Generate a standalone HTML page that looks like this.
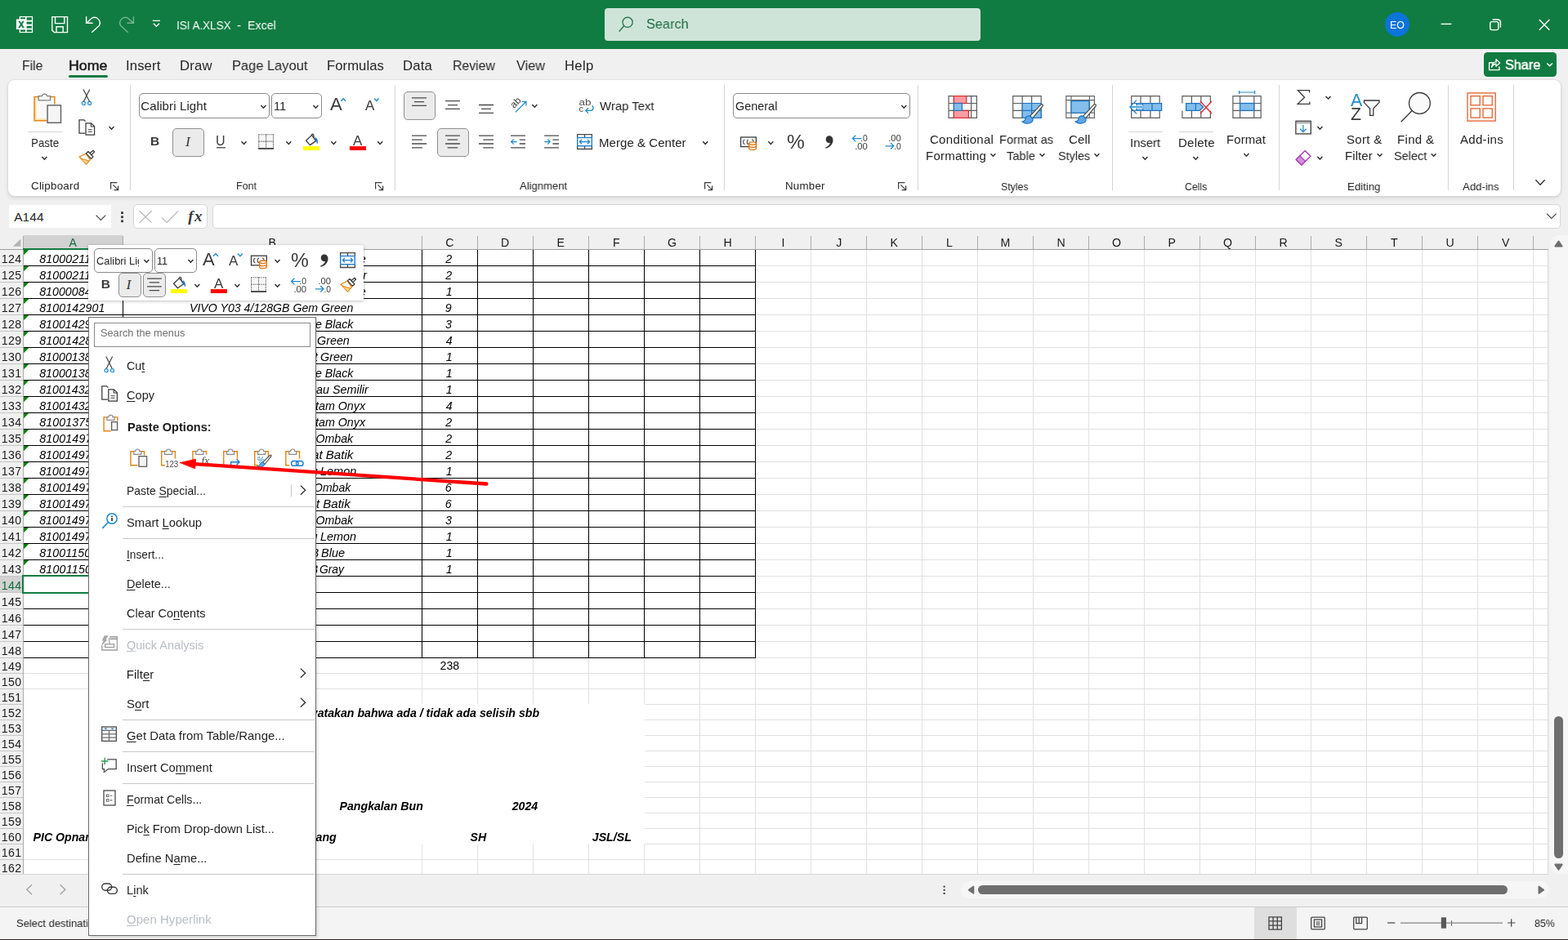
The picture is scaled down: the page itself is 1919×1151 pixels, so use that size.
<!DOCTYPE html>
<html lang="en"><head><meta charset="utf-8"><title>ISI A.XLSX - Excel</title>
<style>
html,body{margin:0;padding:0}
body{width:1919px;height:1151px;overflow:hidden;background:#fff;position:relative;font-family:"Liberation Sans",sans-serif;color:#242424;font-size:15px}
div,span,svg{position:absolute;box-sizing:border-box}
span{white-space:pre}
u{text-decoration:underline;text-underline-offset:1.5px;text-decoration-thickness:1px}
</style></head>
<body>
<div style="left:0px;top:0px;width:1919px;height:60px;background:#107C41"></div>
<div style="left:0px;top:60px;width:1919px;height:228px;background:#F0F0F0"></div>
<span style="left:215.62px;top:22px;font-size:15px;line-height:18px;transform:scaleX(0.8970);transform-origin:0 0;color:#fff;will-change:transform;">ISI A.XLSX</span>
<span style="left:290.26px;top:22px;font-size:15px;line-height:18px;color:#fff;will-change:transform;">-</span>
<span style="left:303.43px;top:22px;font-size:15px;line-height:18px;transform:scaleX(0.9494);transform-origin:0 0;color:#fff;will-change:transform;">Excel</span>
<div style="left:740px;top:10px;width:460px;height:40px;background:#CFE4D8;border-radius:4px"></div>
<span style="left:791.49px;top:20px;font-size:16.67px;line-height:20px;transform:scaleX(0.9801);transform-origin:0 0;color:#1B6B3F;will-change:transform;">Search</span>
<div style="left:1695px;top:15px;width:30px;height:30px;background:#0B74D8;border-radius:50%"></div>
<span style="left:1700.80px;top:24px;font-size:12.4px;line-height:15px;transform:scaleX(0.9946);transform-origin:0 0;color:#fff;will-change:transform;">EO</span>
<span style="left:26.68px;top:71px;font-size:16.67px;line-height:20px;transform:scaleX(0.9480);transform-origin:0 0;color:#242424;will-change:transform;">File</span>
<span style="left:153.53px;top:71px;font-size:16.67px;line-height:20px;letter-spacing:0.133px;color:#242424;will-change:transform;">Insert</span>
<span style="left:219.51px;top:71px;font-size:16.67px;line-height:20px;letter-spacing:0.220px;color:#242424;will-change:transform;">Draw</span>
<span style="left:283.63px;top:71px;font-size:16.67px;line-height:20px;transform:scaleX(0.9868);transform-origin:0 0;color:#242424;will-change:transform;">Page Layout</span>
<span style="left:400.41px;top:71px;font-size:16.67px;line-height:20px;letter-spacing:0.051px;color:#242424;will-change:transform;">Formulas</span>
<span style="left:493.41px;top:71px;font-size:16.67px;line-height:20px;letter-spacing:0.199px;color:#242424;will-change:transform;">Data</span>
<span style="left:553.67px;top:71px;font-size:16.67px;line-height:20px;transform:scaleX(0.9510);transform-origin:0 0;color:#242424;will-change:transform;">Review</span>
<span style="left:631.86px;top:71px;font-size:16.67px;line-height:20px;transform:scaleX(0.9781);transform-origin:0 0;color:#242424;will-change:transform;">View</span>
<span style="left:690.71px;top:71px;font-size:16.67px;line-height:20px;letter-spacing:0.342px;color:#242424;will-change:transform;">Help</span>
<span style="left:83.63px;top:71px;font-size:16.67px;line-height:20px;transform:scaleX(1.0689);transform-origin:0 0;color:#1a1a1a;will-change:transform;-webkit-text-stroke:0.45px #1a1a1a;">Home</span>
<div style="left:84px;top:92px;width:48px;height:3px;background:#107C41;border-radius:1.5px"></div>
<div style="left:1816px;top:64px;width:89px;height:30px;background:#107C41;border-radius:4.5px"></div>
<span style="left:1841.50px;top:70px;font-size:16.67px;line-height:20px;transform:scaleX(0.9739);transform-origin:0 0;color:#fff;will-change:transform;-webkit-text-stroke:0.45px #fff;">Share</span>
<div style="left:9.5px;top:98px;width:1900.5px;height:142px;background:#fff;border-radius:7.5px;box-shadow:0 2px 5px rgba(0,0,0,.13),0 0 1.5px rgba(0,0,0,.16)"></div>
<div style="left:11px;top:251px;width:125px;height:28px;background:#fff"></div>
<span style="left:17.17px;top:257px;font-size:15.4px;line-height:18px;letter-spacing:0.112px;color:#242424;">A144</span>
<div style="left:162.5px;top:250px;width:91px;height:30px;background:#fff;border:1px solid #D6D6D6;border-radius:5px"></div>
<div style="left:259.5px;top:250px;width:1650.5px;height:30px;background:#fff;border:1px solid #D6D6D6;border-radius:5px"></div>
<span style="left:230.35px;top:253px;font-size:19px;line-height:23px;letter-spacing:1.451px;color:#3a3a3a;font-weight:700;font-style:italic;font-family:'Liberation Serif', serif;">fx</span>
<svg width="1919" height="1151" viewBox="0 0 1919 1151" style="left:0;top:0;"><rect x="23.7" y="19.9" width="16.4" height="20.2" fill="#fff"/><rect x="32.6" y="21.2" width="6.3" height="3.5" fill="#107C41"/><rect x="32.6" y="26.6" width="6.3" height="3.0" fill="#107C41"/><rect x="32.6" y="31.7" width="6.3" height="2.9" fill="#107C41"/><rect x="32.6" y="36.4" width="6.3" height="2.5" fill="#107C41"/><rect x="25" y="21.2" width="6" height="2.3" fill="#107C41"/><rect x="25" y="36.4" width="6" height="2.5" fill="#107C41"/><rect x="19.9" y="23.4" width="11.4" height="12.7" rx="0.6" fill="#fff"/><text x="26" y="33.8" font-size="10.6" font-weight="700" text-anchor="middle" fill="#107C41" stroke="#107C41" stroke-width="0.5" font-family="Liberation Sans, sans-serif">X</text><path d="M63.8 20.6H82.5V39.6H66.3L63.8 37.1Z M67.5 20.6V28.6H78.8V20.6 M69 39.6V32.8H77.2V39.6" fill="none" stroke="#fff" stroke-width="1.4" stroke-linejoin="miter"/><path d="M105.6 20.3V28.2H113.6 M106 28 L112.6 22.2 A6.6 6.6 0 0 1 121.2 31.6 L112.2 39.8" fill="none" stroke="#fff" stroke-width="1.4"/><g opacity="0.42"><path d="M163.4 20.3V28.2H155.4 M163 28 L156.4 22.2 A6.6 6.6 0 0 0 147.8 31.6 L156.8 39.8" fill="none" stroke="#fff" stroke-width="1.4"/></g><path d="M186.8 25.4H196 M187.8 28.8L191.4 32.2L195 28.8" fill="none" stroke="#fff" stroke-width="1.4"/><circle cx="768.1" cy="27.3" r="6.1" fill="none" stroke="#1B6B3F" stroke-width="1.2"/><path d="M763.7 31.8L757.6 38.6" stroke="#1B6B3F" stroke-width="1.3" fill="none"/><path d="M1763.6 29.4H1776.4" fill="none" stroke="#fff" stroke-width="1.4"/><rect x="1823.8" y="26.6" width="10" height="10" rx="2" fill="none" stroke="#fff" stroke-width="1.4"/><path d="M1826.6 24H1833 A3.4 3.4 0 0 1 1836.4 27.4V33.8" fill="none" stroke="#fff" stroke-width="1.4"/><path d="M1883.8 24.1L1896.4 36.7M1896.4 24.1L1883.8 36.7" fill="none" stroke="#fff" stroke-width="1.4"/><path d="M1828 76.8H1822.6V85.6H1834.9V81.4" fill="none" stroke="#fff" stroke-width="1.4"/><path d="M1825.6 82.2C1826 78 1828.6 75.9 1831 75.9V72.6L1835.6 77L1831 81.2V78.2C1829 78.2 1827 79.4 1825.6 82.2Z" fill="none" stroke="#fff" stroke-width="1.4" stroke-linejoin="round"/><path d="M1893.3 77.4L1896.6 80.8L1899.9 77.4" fill="none" stroke="#fff" stroke-width="1.4"/><path d="M117.6 263.6L123.4 269.4L129.2 263.6" fill="none" stroke="#444" stroke-width="1.2"/><rect x="148.1" y="259.2" width="2.8" height="2.8" fill="#3a3a3a"/><rect x="148.1" y="264.3" width="2.8" height="2.8" fill="#3a3a3a"/><rect x="148.1" y="269.4" width="2.8" height="2.8" fill="#3a3a3a"/><path d="M170.6 258.2L185.6 272.6M185.6 258.2L170.6 272.6" fill="none" stroke="#B8B8B8" stroke-width="1.3"/><path d="M198 266.4L204.2 272.4L218 258.4" fill="none" stroke="#B8B8B8" stroke-width="1.3"/><path d="M1893 261.6L1898.8 267.4L1904.6 261.6" fill="none" stroke="#444" stroke-width="1.2"/></svg>
<span style="left:37.99px;top:166px;font-size:15px;line-height:18px;transform:scaleX(0.8915);transform-origin:0 0;color:#242424;will-change:transform;">Paste</span>
<span style="left:37.50px;top:220px;font-size:13.33px;line-height:16px;letter-spacing:0.263px;color:#242424;will-change:transform;">Clipboard</span>
<div style="left:170px;top:114px;width:160px;height:31px;background:#fff;border:1px solid #8A8A8A;border-radius:5px"></div>
<span style="left:172.30px;top:121px;font-size:15px;line-height:18px;letter-spacing:0.120px;color:#242424;">Calibri Light</span>
<div style="left:332px;top:114px;width:62px;height:31px;background:#fff;border:1px solid #8A8A8A;border-radius:5px"></div>
<span style="left:335.25px;top:121px;font-size:15px;line-height:18px;transform:scaleX(0.9683);transform-origin:0 0;color:#242424;">11</span>
<span style="left:404.06px;top:115px;font-size:22px;line-height:26px;color:#3a3a3a;will-change:transform;">A</span>
<span style="left:447.17px;top:120px;font-size:17px;line-height:20px;color:#3a3a3a;will-change:transform;">A</span>
<span style="left:183.78px;top:163px;font-size:15.5px;line-height:19px;color:#3a3a3a;font-weight:700;will-change:transform;">B</span>
<div style="left:211px;top:157px;width:38.5px;height:35px;background:#EBEBEB;border:1px solid #8F8F8F;border-radius:5px"></div>
<span style="left:226.78px;top:163px;font-size:17.5px;line-height:21px;color:#3a3a3a;font-style:italic;font-family:'Liberation Serif', serif;will-change:transform;">I</span>
<span style="left:263.67px;top:163px;font-size:16px;line-height:19px;color:#3a3a3a;will-change:transform;">U</span>
<span style="left:432.27px;top:163px;font-size:17px;line-height:20px;color:#3a3a3a;will-change:transform;">A</span>
<span style="left:288.71px;top:220px;font-size:13.33px;line-height:16px;transform:scaleX(0.9383);transform-origin:0 0;color:#242424;will-change:transform;">Font</span>
<div style="left:494px;top:112px;width:38.8px;height:35px;background:#EBEBEB;border:1px solid #8F8F8F;border-radius:5px"></div>
<span style="left:734.28px;top:121px;font-size:15px;line-height:18px;transform:scaleX(0.9934);transform-origin:0 0;color:#242424;will-change:transform;">Wrap Text</span>
<div style="left:535px;top:157px;width:39px;height:35px;background:#EBEBEB;border:1px solid #8F8F8F;border-radius:5px"></div>
<span style="left:733.27px;top:166px;font-size:15px;line-height:18px;letter-spacing:0.051px;color:#242424;will-change:transform;">Merge &amp; Center</span>
<span style="left:636.27px;top:220px;font-size:13.33px;line-height:16px;transform:scaleX(0.9796);transform-origin:0 0;color:#242424;will-change:transform;">Alignment</span>
<div style="left:897px;top:114px;width:217px;height:31px;background:#fff;border:1px solid #8A8A8A;border-radius:5px"></div>
<span style="left:899.64px;top:121px;font-size:15px;line-height:18px;transform:scaleX(0.9620);transform-origin:0 0;color:#242424;">General</span>
<span style="left:962.80px;top:159px;font-size:24.5px;line-height:29px;color:#3a3a3a;will-change:transform;">%</span>
<span style="left:960.55px;top:220px;font-size:13.33px;line-height:16px;letter-spacing:0.218px;color:#242424;will-change:transform;">Number</span>
<span style="left:1138.40px;top:162px;font-size:15px;line-height:18px;letter-spacing:0.290px;color:#242424;will-change:transform;">Conditional</span>
<span style="left:1133.27px;top:182px;font-size:15px;line-height:18px;letter-spacing:0.249px;color:#242424;will-change:transform;">Formatting</span>
<span style="left:1223.40px;top:162px;font-size:15px;line-height:18px;transform:scaleX(0.9784);transform-origin:0 0;color:#242424;will-change:transform;">Format as</span>
<span style="left:1232.42px;top:182px;font-size:15px;line-height:18px;transform:scaleX(0.9765);transform-origin:0 0;color:#242424;will-change:transform;">Table</span>
<span style="left:1307.90px;top:162px;font-size:15px;line-height:18px;letter-spacing:0.166px;color:#242424;will-change:transform;">Cell</span>
<span style="left:1295.33px;top:182px;font-size:15px;line-height:18px;transform:scaleX(0.9593);transform-origin:0 0;color:#242424;will-change:transform;">Styles</span>
<span style="left:1225.45px;top:221px;font-size:13.33px;line-height:16px;transform:scaleX(0.9231);transform-origin:0 0;color:#242424;will-change:transform;">Styles</span>
<span style="left:1383.21px;top:166px;font-size:15px;line-height:18px;transform:scaleX(0.9889);transform-origin:0 0;color:#242424;will-change:transform;">Insert</span>
<span style="left:1441.67px;top:166px;font-size:15px;line-height:18px;letter-spacing:0.244px;color:#242424;will-change:transform;">Delete</span>
<span style="left:1501.47px;top:162px;font-size:15px;line-height:18px;letter-spacing:0.085px;color:#242424;will-change:transform;">Format</span>
<span style="left:1449.78px;top:221px;font-size:13.33px;line-height:16px;transform:scaleX(0.9179);transform-origin:0 0;color:#242424;will-change:transform;">Cells</span>
<span style="left:1653.07px;top:110px;font-size:21.4px;line-height:26px;color:#1E8BCD;will-change:transform;">A</span>
<span style="left:1653.26px;top:127px;font-size:21.4px;line-height:26px;color:#3a3a3a;will-change:transform;">Z</span>
<span style="left:1648.38px;top:162px;font-size:15px;line-height:18px;letter-spacing:0.303px;color:#242424;will-change:transform;">Sort &amp;</span>
<span style="left:1646.47px;top:182px;font-size:15px;line-height:18px;letter-spacing:0.088px;color:#242424;will-change:transform;">Filter</span>
<span style="left:1710.27px;top:162px;font-size:15px;line-height:18px;letter-spacing:0.340px;color:#242424;will-change:transform;">Find &amp;</span>
<span style="left:1705.52px;top:182px;font-size:15px;line-height:18px;transform:scaleX(0.9651);transform-origin:0 0;color:#242424;will-change:transform;">Select</span>
<span style="left:1648.65px;top:221px;font-size:13.33px;line-height:16px;transform:scaleX(0.9918);transform-origin:0 0;color:#242424;will-change:transform;">Editing</span>
<span style="left:1787.07px;top:162px;font-size:15px;line-height:18px;letter-spacing:0.305px;color:#242424;will-change:transform;">Add-ins</span>
<span style="left:1790.27px;top:221px;font-size:13.33px;line-height:16px;transform:scaleX(0.9875);transform-origin:0 0;color:#242424;will-change:transform;">Add-ins</span>
<svg width="1919" height="1151" viewBox="0 0 1919 1151" style="left:0;top:0;"><g transform="translate(40.4 112.6) scale(1.0)"><path d="M6.6 5.8H1.7V35.2H17V14.8H26.4V5.8H21.4" fill="#FAFAFA" stroke="none"/><path d="M3.5 7.4V33.4H17" fill="none" stroke="#FCDFA0" stroke-width="1.4"/><path d="M6.6 5.8H1.7V35.2H17" fill="none" stroke="#E8820E" stroke-width="1.5"/><path d="M21.4 5.8H26.4V14.8" fill="none" stroke="#E8820E" stroke-width="1.5"/><path d="M6.8 10.2V5H10.8 A3.3 3.3 0 0 1 17.2 5H21.2V10.2Z" fill="#FAFAFA" stroke="#7E7E7E" stroke-width="1.3"/><rect x="17.7" y="16.3" width="16.4" height="21.4" fill="#F5F5F5" stroke="#5E5E5E" stroke-width="1.4"/></g><rect x="34" y="161" width="42" height="1" fill="#D4D4D4"/><path d="M51.4 192.0L54.4 195.2L57.4 192.0" fill="none" stroke="#2b2b2b" stroke-width="1.4"/><g transform="translate(99.4 109.2) scale(1.0)"><path d="M2.6 0.2L10.2 15.4M10.4 0.2L2.8 15.4" fill="none" stroke="#3A3A3A" stroke-width="1.15" /><circle cx="2.9" cy="17.3" r="2.05" fill="none" stroke="#1E8BCD" stroke-width="1.2" /><circle cx="10.2" cy="17.3" r="2.05" fill="none" stroke="#1E8BCD" stroke-width="1.2" /></g><g transform="translate(96.4 146.2) scale(1.0)"><path d="M7.6 17H0.6V0.6H6.4L8.2 2.4" fill="none" stroke="#3A3A3A" stroke-width="1.25" /><path d="M8.6 4.6H15.2L19.2 8.6V19H8.6Z" fill="#FAFAFA" stroke="#3A3A3A" stroke-width="1.25"/><path d="M15 4.8V8.8H19" fill="none" stroke="#3A3A3A" stroke-width="1.1" /><path d="M11.4 12.4H16.4M11.4 15.2H16.4" fill="none" stroke="#6a6a6a" stroke-width="1.1" /></g><path d="M133.5 155.1L136.5 158.3L139.5 155.1" fill="none" stroke="#2b2b2b" stroke-width="1.4"/><g transform="translate(96.4 183.4) scale(1.0)"><path d="M0.8 8.6L8.8 4.6L14 12.2L9 17.6Z" fill="#FFFDF8" stroke="#E8820E" stroke-width="1.3" stroke-linejoin="round"/><path d="M3.6 11.4L12 13.6L9 17L4.2 12.2Z" fill="#FDD88A" stroke="none"/><path d="M3.2 10.8L12.4 13.6" fill="none" stroke="#E8820E" stroke-width="1.1"/><path d="M9 4.4L11.6 2L17.6 8.6L15 11Z" fill="#fff" stroke="#3A3A3A" stroke-width="1.25" stroke-linejoin="round"/><path d="M13.6 4.2L17.6 0.8L19.2 2.6L15.4 6.2Z" fill="#fff" stroke="#3A3A3A" stroke-width="1.25" stroke-linejoin="round"/></g><path d="M143.4 223.6H135.6V231.4M138.4 226.4L144.4 232.4M144.6 227.6V232.6H139.6" fill="none" stroke="#3a3a3a" stroke-width="1.2"/><rect x="159.0" y="104" width="1" height="129" fill="#D4D4D4"/><path d="M319.4 129.0L322.4 132.2L325.4 129.0" fill="none" stroke="#2b2b2b" stroke-width="1.4"/><path d="M383.4 129.0L386.4 132.2L389.4 129.0" fill="none" stroke="#2b2b2b" stroke-width="1.4"/><path d="M417.4 123.8L420.2 120.8L423 123.8" fill="none" stroke="#1E8BCD" stroke-width="1.4" /><path d="M458 120.6L460.8 123.6L463.6 120.6" fill="none" stroke="#1E8BCD" stroke-width="1.4" /><rect x="265" y="180.2" width="11" height="1.2" fill="#3a3a3a"/><path d="M295.5 173.2L298.5 176.4L301.5 173.2" fill="none" stroke="#2b2b2b" stroke-width="1.4"/><rect x="316.70000000000005" y="164.7" width="17.8" height="16.6" fill="#F7F7F7"/><path d="M316.70000000000005 164.7H334.5M316.70000000000005 173.1H334.5M316.70000000000005 164.7V181.1M325.6 164.7V181.1M334.5 164.7V181.1" fill="none" stroke="#4a4a4a" stroke-width="1.1" stroke-dasharray="1.2 1.2"/><rect x="316.1" y="181.0" width="19" height="1.9" fill="#4a4a4a"/><path d="M350.3 173.2L353.3 176.4L356.3 173.2" fill="none" stroke="#2b2b2b" stroke-width="1.4"/><g transform="translate(374 164.2)"><path d="M0.6 8L7.6 1.2L12.6 8.4L5.4 13.4Z" fill="#fff" stroke="#3A3A3A" stroke-width="1.3" stroke-linejoin="round"/><path d="M7.4 1.4C7.2 -0.4 9.6 -0.6 9.8 1.2L10.2 4.6" fill="none" stroke="#3A3A3A" stroke-width="1.2" /><path d="M12 4.4C14 5.4 14.8 8 14.4 11.4C13.6 9.4 13.2 7.6 11.4 6.4Z" fill="#1E74C5" stroke="#1E74C5" stroke-width="0.8"/></g><rect x="371" y="179.1" width="20.1" height="4.9" fill="#FFFF00"/><path d="M405.4 173.2L408.4 176.4L411.4 173.2" fill="none" stroke="#2b2b2b" stroke-width="1.4"/><rect x="427.9" y="179.1" width="20.1" height="4.9" fill="#FF0000"/><path d="M462.2 173.2L465.2 176.4L468.2 173.2" fill="none" stroke="#2b2b2b" stroke-width="1.4"/><path d="M467.4 223.6H459.6V231.4M462.4 226.4L468.4 232.4M468.6 227.6V232.6H463.6" fill="none" stroke="#3a3a3a" stroke-width="1.2"/><rect x="482.9" y="104" width="1" height="129" fill="#D4D4D4"/><path d="M504 119.9H522M506.9 124.7H519.1M504 129.4H522" fill="none" stroke="#4a4a4a" stroke-width="1.3"/><path d="M545 123.7H562.9M548 128.6H560M545 133.4H562.9" fill="none" stroke="#4a4a4a" stroke-width="1.3"/><path d="M586 128.5H604M589 133.4H601M586 138.3H604" fill="none" stroke="#4a4a4a" stroke-width="1.3"/><text transform="translate(629 133) rotate(-45)" font-family="Liberation Sans, sans-serif" font-size="11.8" fill="#3a3a3a">ab</text><path d="M630.8 137.4L643.7 124.5M638.6 124.3H643.9V129.6" fill="none" stroke="#1E8BCD" stroke-width="1.3" /><path d="M651.3 128.0L654.3 131.2L657.3 128.0" fill="none" stroke="#2b2b2b" stroke-width="1.4"/><text x="708.6" y="128.6" font-family="Liberation Sans, sans-serif" font-size="11.4" fill="#4a4a4a" textLength="15" lengthAdjust="spacingAndGlyphs">ab</text><text x="708.6" y="137.4" font-family="Liberation Sans, sans-serif" font-size="11.4" fill="#4a4a4a">c</text><path d="M724.6 129.4C727 131 726.4 135.4 722.4 135.4H717M720 132.2L716.8 135.4L720 138.6" fill="none" stroke="#1E8BCD" stroke-width="1.3" /><path d="M504 166.2H522M504 171.1H516.9M504 176H522M504 180.9H516.9" fill="none" stroke="#4a4a4a" stroke-width="1.3"/><path d="M545 166.2H562.9M547.6 171.1H560.2M545 176H562.9M547.6 180.9H560.2" fill="none" stroke="#4a4a4a" stroke-width="1.3"/><path d="M586 166.2H604M591.3 171.1H604M586 176H604M591.3 180.9H604" fill="none" stroke="#4a4a4a" stroke-width="1.3"/><path d="M625.1 166.2H643M635.8 171.1H643M635.8 176H643M625.1 180.9H643" fill="none" stroke="#4a4a4a" stroke-width="1.3"/><path d="M632.6 173.6H625.6M628.6 170.6L625.6 173.6L628.6 176.6" fill="none" stroke="#1E8BCD" stroke-width="1.3" /><path d="M666.1 166.2H684M676.4 171.1H684M676.4 176H684M666.1 180.9H684" fill="none" stroke="#4a4a4a" stroke-width="1.3"/><path d="M666.2 173.6H673.2M670.2 170.6L673.2 173.6L670.2 176.6" fill="none" stroke="#1E8BCD" stroke-width="1.3" /><path d="M706.6 168.29999999999998V164.7H724.4V168.29999999999998M715.5 164.7V168.29999999999998M706.6 178.9V182.5H724.4V178.9M715.5 178.9V182.5" fill="none" stroke="#4a4a4a" stroke-width="1.3" /><rect x="706.7" y="168.5" width="17.6" height="10.2" fill="#fff" stroke="#1E7FD0" stroke-width="1.4"/><path d="M709.4 173.6H721.6M712 171.0L709.4 173.6L712 176.2M719 171.0L721.6 173.6L719 176.2" fill="none" stroke="#1E7FD0" stroke-width="1.3" /><path d="M860.2 173.2L863.2 176.4L866.2 173.2" fill="none" stroke="#2b2b2b" stroke-width="1.4"/><path d="M870.4 223.6H862.6V231.4M865.4 226.4L871.4 232.4M871.6 227.6V232.6H866.6" fill="none" stroke="#3a3a3a" stroke-width="1.2"/><rect x="885.9" y="104" width="1" height="129" fill="#D4D4D4"/><path d="M1103.3 129.0L1106.3 132.2L1109.3 129.0" fill="none" stroke="#2b2b2b" stroke-width="1.4"/><g transform="translate(906 167.4)"><rect x="0.6" y="0.6" width="18.8" height="11.6" fill="#fff" stroke="#3A3A3A" stroke-width="1.3"/><path d="M5.6 3.6C3 3.8 3 9 5.6 9.2M10.2 3.6C7.6 3.8 7.6 9 10.2 9.2M14 3.4C15.6 3.6 16.2 5 16 6.2" fill="none" stroke="#555" stroke-width="1.2" /><path d="M10.8 8.2V14.4C10.8 16.6 19.4 16.6 19.4 14.4V8.2Z" fill="#fff" stroke="#E8710A" stroke-width="1.3"/><ellipse cx="15.1" cy="8.2" rx="4.3" ry="1.8" fill="#fff" stroke="#E8710A" stroke-width="1.3"/><path d="M10.8 11.4C10.8 13.6 19.4 13.6 19.4 11.4" fill="none" stroke="#E8710A" stroke-width="1.3"/></g><path d="M940.3 173.2L943.3 176.4L946.3 173.2" fill="none" stroke="#2b2b2b" stroke-width="1.4"/><g transform="translate(1009.9 166.3)"><path d="M4.8 0C7.8 0 9.6 2.2 9.6 5.4C9.6 10.4 5.6 14.4 0.6 15.4L0.2 14.2C3.6 13 5.8 10.6 6 8.4C3.4 9.2 0.8 7.4 0.8 4.4C0.8 1.8 2.6 0 4.8 0Z" fill="#333"/></g><text x="1053.1999999999998" y="173.2" font-family="Liberation Sans, sans-serif" font-size="10.6" fill="#3a3a3a" textLength="8.6" lengthAdjust="spacingAndGlyphs">.0</text><text x="1046.1999999999998" y="182.79999999999998" font-family="Liberation Sans, sans-serif" font-size="10.6" fill="#3a3a3a" textLength="15.6" lengthAdjust="spacingAndGlyphs">.00</text><path d="M1054.6 169.6H1043.3999999999999M1047.1999999999998 165.79999999999998L1043.3999999999999 169.6L1047.1999999999998 173.39999999999998" fill="none" stroke="#1E8BCD" stroke-width="1.3" /><text x="1087.1999999999998" y="173.2" font-family="Liberation Sans, sans-serif" font-size="10.6" fill="#3a3a3a" textLength="15.6" lengthAdjust="spacingAndGlyphs">.00</text><text x="1094.1999999999998" y="182.79999999999998" font-family="Liberation Sans, sans-serif" font-size="10.6" fill="#3a3a3a" textLength="8.6" lengthAdjust="spacingAndGlyphs">.0</text><path d="M1083.6 178.79999999999998H1093.8M1090.0 175.0L1093.8 178.79999999999998L1090.0 182.6" fill="none" stroke="#1E8BCD" stroke-width="1.3" /><path d="M1107.4 223.6H1099.6V231.4M1102.4 226.4L1108.4 232.4M1108.6 227.6V232.6H1103.6" fill="none" stroke="#3a3a3a" stroke-width="1.2"/><rect x="1122.9" y="104" width="1" height="129" fill="#D4D4D4"/><path d="M1161 117.6H1195.4V144.4H1161ZM1167.4 117.6V144.4M1188.6 117.6V144.4M1161 126.5H1195.4M1161 135.4H1195.4" fill="#FAFAFA" stroke="#5E5E5E" stroke-width="1.2"/><rect x="1167.4" y="117.6" width="15.4" height="8.9" fill="#FF9BA3" stroke="#D92C32" stroke-width="1.2"/><rect x="1167.4" y="135.4" width="18" height="9" fill="#FF9BA3" stroke="#D92C32" stroke-width="1.2"/><rect x="1167.4" y="126.5" width="10" height="8.9" fill="#83BEEC" stroke="#1E74C5" stroke-width="1.2"/><path d="M1212.5 188.2L1215.4 191.2L1218.3 188.2" fill="none" stroke="#2b2b2b" stroke-width="1.4"/><path d="M1239.7 117.6H1274.2V144.4H1239.7ZM1251.2 117.6V144.4M1262.6 117.6V144.4M1239.7 126.5H1274.2M1239.7 135.4H1274.2" fill="#FAFAFA" stroke="#5E5E5E" stroke-width="1.2"/><path d="M1251.2 126.5H1274.2V144.4H1251.2Z" fill="#83BEEC" stroke="#1E74C5" stroke-width="1.2"/><path d="M1262.6 126.5V144.4M1251.2 135.4H1274.2" fill="none" stroke="#1E74C5" stroke-width="1.2"/><g transform="translate(1249 125.6)"><path d="M11.6 16.6L24.8 2.6C26.2 1.2 28.2 2.8 27 4.4L14.6 19.2Z" fill="#fff" stroke="#4a4a4a" stroke-width="1.2" stroke-linejoin="round"/><path d="M11.6 16.6C8.2 15.4 6 17.8 5.8 20.2C5.6 22.2 3.8 23.2 1.8 23.2C5 25.8 10.2 26.4 13.2 24.2C15 22.8 15.4 20.6 14.6 19.2Z" fill="#5EA7E6" stroke="#1E74C5" stroke-width="1.2" stroke-linejoin="round"/></g><path d="M1272.6 188.2L1275.5 191.2L1278.4 188.2" fill="none" stroke="#2b2b2b" stroke-width="1.4"/><path d="M1304.8 117.6H1339.4V144.4H1304.8ZM1311 117.6V144.4M1333.4 117.6V144.4M1304.8 122.6H1339.4M1304.8 138.2H1339.4" fill="#FAFAFA" stroke="#6a6a6a" stroke-width="1.2"/><rect x="1311" y="123.6" width="22" height="14.6" fill="#83BEEC" stroke="#1E74C5" stroke-width="1.2"/><g transform="translate(1314 125.6)"><path d="M11.6 16.6L24.8 2.6C26.2 1.2 28.2 2.8 27 4.4L14.6 19.2Z" fill="#fff" stroke="#4a4a4a" stroke-width="1.2" stroke-linejoin="round"/><path d="M11.6 16.6C8.2 15.4 6 17.8 5.8 20.2C5.6 22.2 3.8 23.2 1.8 23.2C5 25.8 10.2 26.4 13.2 24.2C15 22.8 15.4 20.6 14.6 19.2Z" fill="#5EA7E6" stroke="#1E74C5" stroke-width="1.2" stroke-linejoin="round"/></g><path d="M1339.5 188.2L1342.4 191.2L1345.3 188.2" fill="none" stroke="#2b2b2b" stroke-width="1.4"/><rect x="1361.0" y="104" width="1" height="129" fill="#D4D4D4"/><path d="M1384.7 117.6H1419.2V144.4H1384.7ZM1396 117.6V144.4M1407.9 117.6V144.4M1384.7 126.5H1419.2M1384.7 135.4H1419.2" fill="#FAFAFA" stroke="#5E5E5E" stroke-width="1.2"/><path d="M1391 126.6H1421.6V135.4H1391Z" fill="#83BEEC" stroke="#1E74C5" stroke-width="1.3"/><path d="M1410 126.6V135.4M1398.6 126.6V135.4" stroke="#1E74C5" stroke-width="1.2" fill="none"/><path d="M1399 131H1383.6" stroke="#fff" stroke-width="3.4" fill="none"/><path d="M1398.8 131H1383M1391 122.6L1382.8 131L1391 139.2" stroke="#1E8BCD" stroke-width="1.3" fill="none"/><rect x="1381" y="161" width="42" height="1" fill="#D4D4D4"/><path d="M1398.4 192.0L1401.4 195.2L1404.4 192.0" fill="none" stroke="#2b2b2b" stroke-width="1.4"/><path d="M1446.9 126.5V117.6H1481.4V126.5M1458.4 117.6V126.5M1469.8 117.6V126.5M1446.9 135.4V144.4H1481.4V135.4M1458.4 135.4V144.4M1469.8 135.4V144.4" fill="#FAFAFA" stroke="#5E5E5E" stroke-width="1.2"/><path d="M1451.6 126.6H1468L1472.6 131L1468 135.4H1451.6Z" fill="#83BEEC" stroke="#1E74C5" stroke-width="1.3"/><path d="M1463.4 126.6V135.4" stroke="#1E74C5" stroke-width="1.2"/><path d="M1469 124L1483 139M1483 124L1469 139" stroke="#E8262D" stroke-width="1.3" fill="none"/><rect x="1443" y="161" width="42" height="1" fill="#D4D4D4"/><path d="M1460.4 192.0L1463.4 195.2L1466.4 192.0" fill="none" stroke="#2b2b2b" stroke-width="1.4"/><path d="M1508.9 117.6H1543.2V144.4H1508.9ZM1517.6 117.6V144.4M1534.8 117.6V144.4M1508.9 126.5H1543.2M1508.9 135.4H1543.2" fill="#FAFAFA" stroke="#5E5E5E" stroke-width="1.2"/><rect x="1517.6" y="126.5" width="17.2" height="8.9" fill="#83BEEC" stroke="#1E74C5" stroke-width="1.3"/><path d="M1516.6 113H1535.6M1516.6 111V115M1535.6 111V115" fill="none" stroke="#1E8BCD" stroke-width="1.2" /><path d="M1522.4 188.0L1525.4 191.2L1528.4 188.0" fill="none" stroke="#2b2b2b" stroke-width="1.4"/><rect x="1565.1" y="104" width="1" height="129" fill="#D4D4D4"/><path d="M1602.6 113.6V110.7H1588.4L1596.6 119.2L1588.2 127.4H1602.8V124.6" fill="none" stroke="#3A3A3A" stroke-width="1.3" /><path d="M1622.5 117.9L1625.5 121.1L1628.5 117.9" fill="none" stroke="#2b2b2b" stroke-width="1.4"/><rect x="1585.9" y="148.3" width="18.4" height="15.6" fill="#fff" stroke="#3A3A3A" stroke-width="1.3"/><path d="M1585.9 150.4H1604.3" stroke="#8a8a8a" stroke-width="1.4"/><path d="M1594.9 153V161.4M1591.2 157.8L1594.9 161.6L1598.6 157.8" fill="none" stroke="#1E8BCD" stroke-width="1.3" /><path d="M1612.4 155.1L1615.4 158.3L1618.4 155.1" fill="none" stroke="#2b2b2b" stroke-width="1.4"/><path d="M1586.2 195.4L1597.2 184.6L1604 191.2L1593 202Z" fill="#FAFAFA" stroke="#A33DB5" stroke-width="1.4" stroke-linejoin="round"/><path d="M1586.2 195.4L1590.8 190.8L1597.6 197.4L1593 202Z" fill="#D691DE" stroke="#A33DB5" stroke-width="1.2" stroke-linejoin="round"/><path d="M1612.4 191.7L1615.4 194.9L1618.4 191.7" fill="none" stroke="#2b2b2b" stroke-width="1.4"/><path d="M1669.4 123H1688V125.4L1680.8 133V141.4H1676.6V133L1669.4 125.4Z" fill="#FAFAFA" stroke="#3A3A3A" stroke-width="1.3" stroke-linejoin="round"/><path d="M1685.7 188.2L1688.6 191.2L1691.5 188.2" fill="none" stroke="#2b2b2b" stroke-width="1.4"/><circle cx="1737.4" cy="126.4" r="12.9" fill="#FAFAFA" stroke="#3A3A3A" stroke-width="1.3"/><path d="M1728.2 135.6L1714.6 149.2" fill="none" stroke="#3A3A3A" stroke-width="1.4" /><path d="M1751.7 188.2L1754.6 191.2L1757.5 188.2" fill="none" stroke="#2b2b2b" stroke-width="1.4"/><rect x="1771.9" y="104" width="1" height="129" fill="#D4D4D4"/><rect x="1796" y="113.9" width="34.2" height="34.2" fill="none" stroke="#E2612C" stroke-width="1.3" /><rect x="1800" y="117.6" width="11.2" height="11.2" fill="none" stroke="#E2612C" stroke-width="1.3" /><rect x="1800" y="132.9" width="11.2" height="11.2" fill="none" stroke="#E2612C" stroke-width="1.3" /><rect x="1815" y="117.6" width="11.2" height="11.2" fill="none" stroke="#E2612C" stroke-width="1.3" /><rect x="1815" y="132.9" width="11.2" height="11.2" fill="none" stroke="#E2612C" stroke-width="1.3" /><rect x="1852.0" y="104" width="1" height="129" fill="#D4D4D4"/><path d="M1879.4 220.2L1885.0 226.2L1890.6 220.2" fill="none" stroke="#2b2b2b" stroke-width="1.3"/></svg>
<div style="left:0px;top:288px;width:1919px;height:782px;background:#F0F0F0"></div>
<div style="left:29px;top:306px;width:1865px;height:764px;background:#fff"></div>
<svg width="1919" height="1151" viewBox="0 0 1919 1151" style="left:0;top:0;"><rect x="28" y="325" width="1866" height="1" fill="#E1E1E1"/><rect x="28" y="345" width="1866" height="1" fill="#E1E1E1"/><rect x="28" y="365" width="1866" height="1" fill="#E1E1E1"/><rect x="28" y="385" width="1866" height="1" fill="#E1E1E1"/><rect x="28" y="405" width="1866" height="1" fill="#E1E1E1"/><rect x="28" y="425" width="1866" height="1" fill="#E1E1E1"/><rect x="28" y="445" width="1866" height="1" fill="#E1E1E1"/><rect x="28" y="465" width="1866" height="1" fill="#E1E1E1"/><rect x="28" y="485" width="1866" height="1" fill="#E1E1E1"/><rect x="28" y="505" width="1866" height="1" fill="#E1E1E1"/><rect x="28" y="525" width="1866" height="1" fill="#E1E1E1"/><rect x="28" y="545" width="1866" height="1" fill="#E1E1E1"/><rect x="28" y="565" width="1866" height="1" fill="#E1E1E1"/><rect x="28" y="585" width="1866" height="1" fill="#E1E1E1"/><rect x="28" y="605" width="1866" height="1" fill="#E1E1E1"/><rect x="28" y="625" width="1866" height="1" fill="#E1E1E1"/><rect x="28" y="645" width="1866" height="1" fill="#E1E1E1"/><rect x="28" y="665" width="1866" height="1" fill="#E1E1E1"/><rect x="28" y="685" width="1866" height="1" fill="#E1E1E1"/><rect x="28" y="705" width="1866" height="1" fill="#E1E1E1"/><rect x="28" y="725" width="1866" height="1" fill="#E1E1E1"/><rect x="28" y="745" width="1866" height="1" fill="#E1E1E1"/><rect x="28" y="765" width="1866" height="1" fill="#E1E1E1"/><rect x="28" y="785" width="1866" height="1" fill="#E1E1E1"/><rect x="28" y="805" width="1866" height="1" fill="#E1E1E1"/><rect x="28" y="824" width="1866" height="1" fill="#E1E1E1"/><rect x="28" y="843" width="1866" height="1" fill="#E1E1E1"/><rect x="28" y="862" width="1866" height="1" fill="#E1E1E1"/><rect x="28" y="881" width="1866" height="1" fill="#E1E1E1"/><rect x="28" y="900" width="1866" height="1" fill="#E1E1E1"/><rect x="28" y="919" width="1866" height="1" fill="#E1E1E1"/><rect x="28" y="938" width="1866" height="1" fill="#E1E1E1"/><rect x="28" y="957" width="1866" height="1" fill="#E1E1E1"/><rect x="28" y="976" width="1866" height="1" fill="#E1E1E1"/><rect x="28" y="995" width="1866" height="1" fill="#E1E1E1"/><rect x="28" y="1014" width="1866" height="1" fill="#E1E1E1"/><rect x="28" y="1033" width="1866" height="1" fill="#E1E1E1"/><rect x="28" y="1052" width="1866" height="1" fill="#E1E1E1"/><rect x="150" y="306" width="1" height="764" fill="#E1E1E1"/><rect x="516" y="306" width="1" height="764" fill="#E1E1E1"/><rect x="584" y="306" width="1" height="764" fill="#E1E1E1"/><rect x="652" y="306" width="1" height="764" fill="#E1E1E1"/><rect x="720" y="306" width="1" height="764" fill="#E1E1E1"/><rect x="788" y="306" width="1" height="764" fill="#E1E1E1"/><rect x="856" y="306" width="1" height="764" fill="#E1E1E1"/><rect x="924" y="306" width="1" height="764" fill="#E1E1E1"/><rect x="992" y="306" width="1" height="764" fill="#E1E1E1"/><rect x="1060" y="306" width="1" height="764" fill="#E1E1E1"/><rect x="1128" y="306" width="1" height="764" fill="#E1E1E1"/><rect x="1196" y="306" width="1" height="764" fill="#E1E1E1"/><rect x="1264" y="306" width="1" height="764" fill="#E1E1E1"/><rect x="1332" y="306" width="1" height="764" fill="#E1E1E1"/><rect x="1400" y="306" width="1" height="764" fill="#E1E1E1"/><rect x="1468" y="306" width="1" height="764" fill="#E1E1E1"/><rect x="1536" y="306" width="1" height="764" fill="#E1E1E1"/><rect x="1604" y="306" width="1" height="764" fill="#E1E1E1"/><rect x="1672" y="306" width="1" height="764" fill="#E1E1E1"/><rect x="1740" y="306" width="1" height="764" fill="#E1E1E1"/><rect x="1808" y="306" width="1" height="764" fill="#E1E1E1"/><rect x="1876" y="306" width="1" height="764" fill="#E1E1E1"/><rect x="1894" y="306" width="1" height="764" fill="#DADADA"/><rect x="28" y="862" width="761" height="172" fill="#fff"/><rect x="150" y="289" width="1" height="16" fill="#ABABAB"/><rect x="516" y="289" width="1" height="16" fill="#ABABAB"/><rect x="584" y="289" width="1" height="16" fill="#ABABAB"/><rect x="652" y="289" width="1" height="16" fill="#ABABAB"/><rect x="720" y="289" width="1" height="16" fill="#ABABAB"/><rect x="788" y="289" width="1" height="16" fill="#ABABAB"/><rect x="856" y="289" width="1" height="16" fill="#ABABAB"/><rect x="924" y="289" width="1" height="16" fill="#ABABAB"/><rect x="992" y="289" width="1" height="16" fill="#ABABAB"/><rect x="1060" y="289" width="1" height="16" fill="#ABABAB"/><rect x="1128" y="289" width="1" height="16" fill="#ABABAB"/><rect x="1196" y="289" width="1" height="16" fill="#ABABAB"/><rect x="1264" y="289" width="1" height="16" fill="#ABABAB"/><rect x="1332" y="289" width="1" height="16" fill="#ABABAB"/><rect x="1400" y="289" width="1" height="16" fill="#ABABAB"/><rect x="1468" y="289" width="1" height="16" fill="#ABABAB"/><rect x="1536" y="289" width="1" height="16" fill="#ABABAB"/><rect x="1604" y="289" width="1" height="16" fill="#ABABAB"/><rect x="1672" y="289" width="1" height="16" fill="#ABABAB"/><rect x="1740" y="289" width="1" height="16" fill="#ABABAB"/><rect x="1808" y="289" width="1" height="16" fill="#ABABAB"/><rect x="1876" y="289" width="1" height="16" fill="#ABABAB"/><rect x="0" y="305" width="1895" height="1" fill="#9E9E9E"/><rect x="29" y="288" width="121" height="16" fill="#D2D2D2"/><rect x="28" y="304" width="123" height="2" fill="#107C41"/><path d="M25.4 292.6V301.8H15.8Z" fill="#B4B4B4"/><rect x="28" y="289" width="1" height="781" fill="#ABABAB"/><rect x="0" y="325" width="28" height="1" fill="#C6C6C6"/><rect x="0" y="345" width="28" height="1" fill="#C6C6C6"/><rect x="0" y="365" width="28" height="1" fill="#C6C6C6"/><rect x="0" y="385" width="28" height="1" fill="#C6C6C6"/><rect x="0" y="405" width="28" height="1" fill="#C6C6C6"/><rect x="0" y="425" width="28" height="1" fill="#C6C6C6"/><rect x="0" y="445" width="28" height="1" fill="#C6C6C6"/><rect x="0" y="465" width="28" height="1" fill="#C6C6C6"/><rect x="0" y="485" width="28" height="1" fill="#C6C6C6"/><rect x="0" y="505" width="28" height="1" fill="#C6C6C6"/><rect x="0" y="525" width="28" height="1" fill="#C6C6C6"/><rect x="0" y="545" width="28" height="1" fill="#C6C6C6"/><rect x="0" y="565" width="28" height="1" fill="#C6C6C6"/><rect x="0" y="585" width="28" height="1" fill="#C6C6C6"/><rect x="0" y="605" width="28" height="1" fill="#C6C6C6"/><rect x="0" y="625" width="28" height="1" fill="#C6C6C6"/><rect x="0" y="645" width="28" height="1" fill="#C6C6C6"/><rect x="0" y="665" width="28" height="1" fill="#C6C6C6"/><rect x="0" y="685" width="28" height="1" fill="#C6C6C6"/><rect x="0" y="705" width="28" height="1" fill="#C6C6C6"/><rect x="0" y="725" width="28" height="1" fill="#C6C6C6"/><rect x="0" y="745" width="28" height="1" fill="#C6C6C6"/><rect x="0" y="765" width="28" height="1" fill="#C6C6C6"/><rect x="0" y="785" width="28" height="1" fill="#C6C6C6"/><rect x="0" y="805" width="28" height="1" fill="#C6C6C6"/><rect x="0" y="824" width="28" height="1" fill="#C6C6C6"/><rect x="0" y="843" width="28" height="1" fill="#C6C6C6"/><rect x="0" y="862" width="28" height="1" fill="#C6C6C6"/><rect x="0" y="881" width="28" height="1" fill="#C6C6C6"/><rect x="0" y="900" width="28" height="1" fill="#C6C6C6"/><rect x="0" y="919" width="28" height="1" fill="#C6C6C6"/><rect x="0" y="938" width="28" height="1" fill="#C6C6C6"/><rect x="0" y="957" width="28" height="1" fill="#C6C6C6"/><rect x="0" y="976" width="28" height="1" fill="#C6C6C6"/><rect x="0" y="995" width="28" height="1" fill="#C6C6C6"/><rect x="0" y="1014" width="28" height="1" fill="#C6C6C6"/><rect x="0" y="1033" width="28" height="1" fill="#C6C6C6"/><rect x="0" y="1052" width="28" height="1" fill="#C6C6C6"/><rect x="0" y="706" width="28" height="19" fill="#D2D2D2"/><rect x="29" y="325" width="896" height="1" fill="#000"/><rect x="29" y="345" width="896" height="1" fill="#000"/><rect x="29" y="365" width="896" height="1" fill="#000"/><rect x="29" y="385" width="896" height="1" fill="#000"/><rect x="29" y="405" width="896" height="1" fill="#000"/><rect x="29" y="425" width="896" height="1" fill="#000"/><rect x="29" y="445" width="896" height="1" fill="#000"/><rect x="29" y="465" width="896" height="1" fill="#000"/><rect x="29" y="485" width="896" height="1" fill="#000"/><rect x="29" y="505" width="896" height="1" fill="#000"/><rect x="29" y="525" width="896" height="1" fill="#000"/><rect x="29" y="545" width="896" height="1" fill="#000"/><rect x="29" y="565" width="896" height="1" fill="#000"/><rect x="29" y="585" width="896" height="1" fill="#000"/><rect x="29" y="605" width="896" height="1" fill="#000"/><rect x="29" y="625" width="896" height="1" fill="#000"/><rect x="29" y="645" width="896" height="1" fill="#000"/><rect x="29" y="665" width="896" height="1" fill="#000"/><rect x="29" y="685" width="896" height="1" fill="#000"/><rect x="29" y="705" width="896" height="1" fill="#000"/><rect x="29" y="725" width="896" height="1" fill="#000"/><rect x="29" y="745" width="896" height="1" fill="#000"/><rect x="29" y="765" width="896" height="1" fill="#000"/><rect x="29" y="785" width="896" height="1" fill="#000"/><rect x="29" y="805" width="896" height="1" fill="#000"/><rect x="150" y="306" width="1" height="500" fill="#000"/><rect x="516" y="306" width="1" height="500" fill="#000"/><rect x="584" y="306" width="1" height="500" fill="#000"/><rect x="652" y="306" width="1" height="500" fill="#000"/><rect x="720" y="306" width="1" height="500" fill="#000"/><rect x="788" y="306" width="1" height="500" fill="#000"/><rect x="856" y="306" width="1" height="500" fill="#000"/><rect x="924" y="306" width="1" height="500" fill="#000"/><rect x="28" y="304" width="123" height="2" fill="#107C41"/><path d="M29 306H35.2L29 312.2Z" fill="#008000"/><path d="M29 326H35.2L29 332.2Z" fill="#008000"/><path d="M29 346H35.2L29 352.2Z" fill="#008000"/><path d="M29 366H35.2L29 372.2Z" fill="#008000"/><path d="M29 386H35.2L29 392.2Z" fill="#008000"/><path d="M29 406H35.2L29 412.2Z" fill="#008000"/><path d="M29 426H35.2L29 432.2Z" fill="#008000"/><path d="M29 446H35.2L29 452.2Z" fill="#008000"/><path d="M29 466H35.2L29 472.2Z" fill="#008000"/><path d="M29 486H35.2L29 492.2Z" fill="#008000"/><path d="M29 506H35.2L29 512.2Z" fill="#008000"/><path d="M29 526H35.2L29 532.2Z" fill="#008000"/><path d="M29 546H35.2L29 552.2Z" fill="#008000"/><path d="M29 566H35.2L29 572.2Z" fill="#008000"/><path d="M29 586H35.2L29 592.2Z" fill="#008000"/><path d="M29 606H35.2L29 612.2Z" fill="#008000"/><path d="M29 626H35.2L29 632.2Z" fill="#008000"/><path d="M29 646H35.2L29 652.2Z" fill="#008000"/><path d="M29 666H35.2L29 672.2Z" fill="#008000"/><path d="M29 686H35.2L29 692.2Z" fill="#008000"/><rect x="28" y="705" width="123" height="21" fill="none" stroke="#107C41" stroke-width="2"/></svg>
<span style="left:84.44px;top:289px;font-size:14.17px;line-height:17px;color:#0E6B38;">A</span>
<span style="left:328.56px;top:289px;font-size:14.17px;line-height:17px;color:#1a1a1a;">B</span>
<span style="left:545.16px;top:289px;font-size:14.17px;line-height:17px;color:#1a1a1a;">C</span>
<span style="left:613.09px;top:289px;font-size:14.17px;line-height:17px;color:#1a1a1a;">D</span>
<span style="left:681.50px;top:289px;font-size:14.17px;line-height:17px;color:#1a1a1a;">E</span>
<span style="left:749.96px;top:289px;font-size:14.17px;line-height:17px;color:#1a1a1a;">F</span>
<span style="left:817.01px;top:289px;font-size:14.17px;line-height:17px;color:#1a1a1a;">G</span>
<span style="left:885.46px;top:289px;font-size:14.17px;line-height:17px;color:#1a1a1a;">H</span>
<span style="left:956.51px;top:289px;font-size:14.17px;line-height:17px;color:#1a1a1a;">I</span>
<span style="left:1023.35px;top:289px;font-size:14.17px;line-height:17px;color:#1a1a1a;">J</span>
<span style="left:1089.50px;top:289px;font-size:14.17px;line-height:17px;color:#1a1a1a;">K</span>
<span style="left:1158.11px;top:289px;font-size:14.17px;line-height:17px;color:#1a1a1a;">L</span>
<span style="left:1224.55px;top:289px;font-size:14.17px;line-height:17px;color:#1a1a1a;">M</span>
<span style="left:1293.46px;top:289px;font-size:14.17px;line-height:17px;color:#1a1a1a;">N</span>
<span style="left:1361.00px;top:289px;font-size:14.17px;line-height:17px;color:#1a1a1a;">O</span>
<span style="left:1429.56px;top:289px;font-size:14.17px;line-height:17px;color:#1a1a1a;">P</span>
<span style="left:1497.00px;top:289px;font-size:14.17px;line-height:17px;color:#1a1a1a;">Q</span>
<span style="left:1565.46px;top:289px;font-size:14.17px;line-height:17px;color:#1a1a1a;">R</span>
<span style="left:1633.53px;top:289px;font-size:14.17px;line-height:17px;color:#1a1a1a;">S</span>
<span style="left:1702.09px;top:289px;font-size:14.17px;line-height:17px;color:#1a1a1a;">T</span>
<span style="left:1769.47px;top:289px;font-size:14.17px;line-height:17px;color:#1a1a1a;">U</span>
<span style="left:1837.93px;top:289px;font-size:14.17px;line-height:17px;color:#1a1a1a;">V</span>
<div style="left:0;top:288px;width:27px;height:782px;overflow:hidden">
<span style="left:1.85px;top:21px;font-size:14.17px;line-height:17px;letter-spacing:0.324px;color:#1a1a1a;">124</span>
<span style="left:1.85px;top:41px;font-size:14.17px;line-height:17px;letter-spacing:0.324px;color:#1a1a1a;">125</span>
<span style="left:1.85px;top:61px;font-size:14.17px;line-height:17px;letter-spacing:0.337px;color:#1a1a1a;">126</span>
<span style="left:1.85px;top:81px;font-size:14.17px;line-height:17px;letter-spacing:0.351px;color:#1a1a1a;">127</span>
<span style="left:1.85px;top:101px;font-size:14.17px;line-height:17px;letter-spacing:0.342px;color:#1a1a1a;">128</span>
<span style="left:1.85px;top:121px;font-size:14.17px;line-height:17px;letter-spacing:0.349px;color:#1a1a1a;">129</span>
<span style="left:1.85px;top:141px;font-size:14.17px;line-height:17px;letter-spacing:0.324px;color:#1a1a1a;">130</span>
<span style="left:1.85px;top:161px;font-size:14.17px;line-height:17px;letter-spacing:0.343px;color:#1a1a1a;">131</span>
<span style="left:1.85px;top:181px;font-size:14.17px;line-height:17px;letter-spacing:0.351px;color:#1a1a1a;">132</span>
<span style="left:1.85px;top:201px;font-size:14.17px;line-height:17px;letter-spacing:0.349px;color:#1a1a1a;">133</span>
<span style="left:1.85px;top:221px;font-size:14.17px;line-height:17px;letter-spacing:0.324px;color:#1a1a1a;">134</span>
<span style="left:1.85px;top:241px;font-size:14.17px;line-height:17px;letter-spacing:0.324px;color:#1a1a1a;">135</span>
<span style="left:1.85px;top:261px;font-size:14.17px;line-height:17px;letter-spacing:0.337px;color:#1a1a1a;">136</span>
<span style="left:1.85px;top:281px;font-size:14.17px;line-height:17px;letter-spacing:0.351px;color:#1a1a1a;">137</span>
<span style="left:1.85px;top:301px;font-size:14.17px;line-height:17px;letter-spacing:0.342px;color:#1a1a1a;">138</span>
<span style="left:1.85px;top:321px;font-size:14.17px;line-height:17px;letter-spacing:0.349px;color:#1a1a1a;">139</span>
<span style="left:1.85px;top:341px;font-size:14.17px;line-height:17px;letter-spacing:0.324px;color:#1a1a1a;">140</span>
<span style="left:1.85px;top:361px;font-size:14.17px;line-height:17px;letter-spacing:0.343px;color:#1a1a1a;">141</span>
<span style="left:1.85px;top:381px;font-size:14.17px;line-height:17px;letter-spacing:0.351px;color:#1a1a1a;">142</span>
<span style="left:1.85px;top:401px;font-size:14.17px;line-height:17px;letter-spacing:0.349px;color:#1a1a1a;">143</span>
<span style="left:1.85px;top:421px;font-size:14.17px;line-height:17px;letter-spacing:0.324px;color:#0E6B38;">144</span>
<span style="left:1.85px;top:441px;font-size:14.17px;line-height:17px;letter-spacing:0.324px;color:#1a1a1a;">145</span>
<span style="left:1.85px;top:461px;font-size:14.17px;line-height:17px;letter-spacing:0.337px;color:#1a1a1a;">146</span>
<span style="left:1.85px;top:481px;font-size:14.17px;line-height:17px;letter-spacing:0.351px;color:#1a1a1a;">147</span>
<span style="left:1.85px;top:501px;font-size:14.17px;line-height:17px;letter-spacing:0.342px;color:#1a1a1a;">148</span>
<span style="left:1.85px;top:520px;font-size:14.17px;line-height:17px;letter-spacing:0.349px;color:#1a1a1a;">149</span>
<span style="left:1.85px;top:539px;font-size:14.17px;line-height:17px;letter-spacing:0.324px;color:#1a1a1a;">150</span>
<span style="left:1.85px;top:558px;font-size:14.17px;line-height:17px;letter-spacing:0.343px;color:#1a1a1a;">151</span>
<span style="left:1.85px;top:577px;font-size:14.17px;line-height:17px;letter-spacing:0.351px;color:#1a1a1a;">152</span>
<span style="left:1.85px;top:596px;font-size:14.17px;line-height:17px;letter-spacing:0.349px;color:#1a1a1a;">153</span>
<span style="left:1.85px;top:615px;font-size:14.17px;line-height:17px;letter-spacing:0.324px;color:#1a1a1a;">154</span>
<span style="left:1.85px;top:634px;font-size:14.17px;line-height:17px;letter-spacing:0.324px;color:#1a1a1a;">155</span>
<span style="left:1.85px;top:653px;font-size:14.17px;line-height:17px;letter-spacing:0.337px;color:#1a1a1a;">156</span>
<span style="left:1.85px;top:672px;font-size:14.17px;line-height:17px;letter-spacing:0.351px;color:#1a1a1a;">157</span>
<span style="left:1.85px;top:691px;font-size:14.17px;line-height:17px;letter-spacing:0.342px;color:#1a1a1a;">158</span>
<span style="left:1.85px;top:710px;font-size:14.17px;line-height:17px;letter-spacing:0.349px;color:#1a1a1a;">159</span>
<span style="left:1.85px;top:729px;font-size:14.17px;line-height:17px;letter-spacing:0.324px;color:#1a1a1a;">160</span>
<span style="left:1.85px;top:748px;font-size:14.17px;line-height:17px;letter-spacing:0.343px;color:#1a1a1a;">161</span>
<span style="left:1.85px;top:767px;font-size:14.17px;line-height:17px;letter-spacing:0.351px;color:#1a1a1a;">162</span>
</div>
<span style="left:48.18px;top:309px;font-size:14.2px;line-height:17px;letter-spacing:0.142px;color:#000;font-style:italic;">8100021123</span>
<span style="left:212.12px;top:309px;font-size:14.2px;line-height:17px;transform:scaleX(0.9700);transform-origin:0 0;color:#000;font-style:italic;">VIVO Y27s 8/256GB Burgundy Blac</span>
<span style="left:431.82px;top:309px;font-size:14.2px;line-height:17px;transform:scaleX(1.0498);transform-origin:0 0;color:#000;font-style:italic;">ke</span>
<span style="left:545.29px;top:309px;font-size:14.2px;line-height:17px;color:#000;font-style:italic;">2</span>
<span style="left:48.18px;top:329px;font-size:14.2px;line-height:17px;letter-spacing:0.124px;color:#000;font-style:italic;">8100021147</span>
<span style="left:218.44px;top:329px;font-size:14.2px;line-height:17px;transform:scaleX(0.9700);transform-origin:0 0;color:#000;font-style:italic;">VIVO Y27s 8/256GB Garden Gre</span>
<span style="left:420.74px;top:329px;font-size:14.2px;line-height:17px;transform:scaleX(0.9780);transform-origin:0 0;color:#000;font-style:italic;">ener</span>
<span style="left:545.29px;top:329px;font-size:14.2px;line-height:17px;color:#000;font-style:italic;">2</span>
<span style="left:48.18px;top:349px;font-size:14.2px;line-height:17px;letter-spacing:0.034px;color:#000;font-style:italic;">8100008452</span>
<span style="left:235.28px;top:349px;font-size:14.2px;line-height:17px;transform:scaleX(0.9700);transform-origin:0 0;color:#000;font-style:italic;">VIVO Y36 8/256GB Meteor Blac</span>
<span style="left:431.82px;top:349px;font-size:14.2px;line-height:17px;transform:scaleX(1.0498);transform-origin:0 0;color:#000;font-style:italic;">ke</span>
<span style="left:545.69px;top:349px;font-size:14.2px;line-height:17px;color:#000;font-style:italic;">1</span>
<span style="left:48.18px;top:369px;font-size:14.2px;line-height:17px;letter-spacing:0.148px;color:#000;font-style:italic;">8100142901</span>
<span style="left:232.23px;top:369px;font-size:14.2px;line-height:17px;transform:scaleX(0.9973);transform-origin:0 0;color:#000;font-style:italic;">VIVO Y03 4/128GB Gem Green</span>
<span style="left:544.80px;top:369px;font-size:14.2px;line-height:17px;color:#000;font-style:italic;">9</span>
<span style="left:48.18px;top:389px;font-size:14.2px;line-height:17px;letter-spacing:0.034px;color:#000;font-style:italic;">8100142902</span>
<span style="left:231.31px;top:389px;font-size:14.2px;line-height:17px;transform:scaleX(0.9700);transform-origin:0 0;color:#000;font-style:italic;">VIVO Y03 4/128GB Spac</span>
<span style="left:385.93px;top:389px;font-size:14.2px;line-height:17px;transform:scaleX(0.9967);transform-origin:0 0;color:#000;font-style:italic;">e Black</span>
<span style="left:545.12px;top:389px;font-size:14.2px;line-height:17px;color:#000;font-style:italic;">3</span>
<span style="left:48.18px;top:409px;font-size:14.2px;line-height:17px;letter-spacing:0.124px;color:#000;font-style:italic;">8100142874</span>
<span style="left:241.35px;top:409px;font-size:14.2px;line-height:17px;transform:scaleX(0.9700);transform-origin:0 0;color:#000;font-style:italic;">VIVO Y03 4/64GB Gem</span>
<span style="left:388.39px;top:409px;font-size:14.2px;line-height:17px;transform:scaleX(1.0096);transform-origin:0 0;color:#000;font-style:italic;">Green</span>
<span style="left:545.65px;top:409px;font-size:14.2px;line-height:17px;color:#000;font-style:italic;">4</span>
<span style="left:48.18px;top:429px;font-size:14.2px;line-height:17px;letter-spacing:0.036px;color:#000;font-style:italic;">8100013846</span>
<span style="left:220.37px;top:429px;font-size:14.2px;line-height:17px;transform:scaleX(0.9700);transform-origin:0 0;color:#000;font-style:italic;">VIVO Y17s 6/128GB Forest</span>
<span style="left:392.39px;top:429px;font-size:14.2px;line-height:17px;transform:scaleX(1.0096);transform-origin:0 0;color:#000;font-style:italic;">Green</span>
<span style="left:545.69px;top:429px;font-size:14.2px;line-height:17px;color:#000;font-style:italic;">1</span>
<span style="left:48.18px;top:449px;font-size:14.2px;line-height:17px;letter-spacing:0.034px;color:#000;font-style:italic;">8100013852</span>
<span style="left:224.52px;top:449px;font-size:14.2px;line-height:17px;transform:scaleX(0.9700);transform-origin:0 0;color:#000;font-style:italic;">VIVO Y17s 6/128GB Spac</span>
<span style="left:385.93px;top:449px;font-size:14.2px;line-height:17px;transform:scaleX(0.9967);transform-origin:0 0;color:#000;font-style:italic;">e Black</span>
<span style="left:545.69px;top:449px;font-size:14.2px;line-height:17px;color:#000;font-style:italic;">1</span>
<span style="left:48.18px;top:469px;font-size:14.2px;line-height:17px;letter-spacing:0.029px;color:#000;font-style:italic;">8100143210</span>
<span style="left:246.62px;top:469px;font-size:14.2px;line-height:17px;transform:scaleX(0.9700);transform-origin:0 0;color:#000;font-style:italic;">VIVO Y18 8/128GB Hij</span>
<span style="left:386.60px;top:469px;font-size:14.2px;line-height:17px;transform:scaleX(1.0115);transform-origin:0 0;color:#000;font-style:italic;">au Semilir</span>
<span style="left:545.69px;top:469px;font-size:14.2px;line-height:17px;color:#000;font-style:italic;">1</span>
<span style="left:48.18px;top:489px;font-size:14.2px;line-height:17px;letter-spacing:0.024px;color:#000;font-style:italic;">8100143275</span>
<span style="left:249.53px;top:489px;font-size:14.2px;line-height:17px;transform:scaleX(0.9700);transform-origin:0 0;color:#000;font-style:italic;">VIVO Y18 8/128GB Hi</span>
<span style="left:386.46px;top:489px;font-size:14.2px;line-height:17px;transform:scaleX(1.0054);transform-origin:0 0;color:#000;font-style:italic;">tam Onyx</span>
<span style="left:545.65px;top:489px;font-size:14.2px;line-height:17px;color:#000;font-style:italic;">4</span>
<span style="left:48.18px;top:509px;font-size:14.2px;line-height:17px;letter-spacing:0.124px;color:#000;font-style:italic;">8100137564</span>
<span style="left:249.53px;top:509px;font-size:14.2px;line-height:17px;transform:scaleX(0.9700);transform-origin:0 0;color:#000;font-style:italic;">VIVO Y18 8/256GB Hi</span>
<span style="left:386.46px;top:509px;font-size:14.2px;line-height:17px;transform:scaleX(1.0054);transform-origin:0 0;color:#000;font-style:italic;">tam Onyx</span>
<span style="left:545.29px;top:509px;font-size:14.2px;line-height:17px;color:#000;font-style:italic;">2</span>
<span style="left:48.18px;top:529px;font-size:14.2px;line-height:17px;letter-spacing:0.148px;color:#000;font-style:italic;">8100149731</span>
<span style="left:229.69px;top:529px;font-size:14.2px;line-height:17px;transform:scaleX(0.9700);transform-origin:0 0;color:#000;font-style:italic;">VIVO Y28 8/128GB Hijau</span>
<span style="left:386.40px;top:529px;font-size:14.2px;line-height:17px;color:#000;font-style:italic;">Ombak</span>
<span style="left:545.29px;top:529px;font-size:14.2px;line-height:17px;color:#000;font-style:italic;">2</span>
<span style="left:48.18px;top:549px;font-size:14.2px;line-height:17px;letter-spacing:0.034px;color:#000;font-style:italic;">8100149732</span>
<span style="left:229.97px;top:549px;font-size:14.2px;line-height:17px;transform:scaleX(0.9700);transform-origin:0 0;color:#000;font-style:italic;">VIVO Y28 8/128GB Cokl</span>
<span style="left:381.59px;top:549px;font-size:14.2px;line-height:17px;transform:scaleX(1.0630);transform-origin:0 0;color:#000;font-style:italic;">at Batik</span>
<span style="left:545.29px;top:549px;font-size:14.2px;line-height:17px;color:#000;font-style:italic;">2</span>
<span style="left:48.18px;top:569px;font-size:14.2px;line-height:17px;letter-spacing:0.031px;color:#000;font-style:italic;">8100149733</span>
<span style="left:222.51px;top:569px;font-size:14.2px;line-height:17px;transform:scaleX(0.9700);transform-origin:0 0;color:#000;font-style:italic;">VIVO Y28 8/128GB Kuning</span>
<span style="left:391.52px;top:569px;font-size:14.2px;line-height:17px;transform:scaleX(1.0196);transform-origin:0 0;color:#000;font-style:italic;">Lemon</span>
<span style="left:545.69px;top:569px;font-size:14.2px;line-height:17px;color:#000;font-style:italic;">1</span>
<span style="left:48.18px;top:589px;font-size:14.2px;line-height:17px;letter-spacing:0.124px;color:#000;font-style:italic;">8100149734</span>
<span style="left:226.89px;top:589px;font-size:14.2px;line-height:17px;transform:scaleX(0.9700);transform-origin:0 0;color:#000;font-style:italic;">VIVO Y28 8/256GB Hijau</span>
<span style="left:383.61px;top:589px;font-size:14.2px;line-height:17px;transform:scaleX(0.9887);transform-origin:0 0;color:#000;font-style:italic;">Ombak</span>
<span style="left:544.80px;top:589px;font-size:14.2px;line-height:17px;color:#000;font-style:italic;">6</span>
<span style="left:48.18px;top:609px;font-size:14.2px;line-height:17px;letter-spacing:0.024px;color:#000;font-style:italic;">8100149735</span>
<span style="left:228.81px;top:609px;font-size:14.2px;line-height:17px;transform:scaleX(0.9700);transform-origin:0 0;color:#000;font-style:italic;">VIVO Y28 8/256GB Cokla</span>
<span style="left:387.05px;top:609px;font-size:14.2px;line-height:17px;transform:scaleX(1.0567);transform-origin:0 0;color:#000;font-style:italic;">t Batik</span>
<span style="left:544.80px;top:609px;font-size:14.2px;line-height:17px;color:#000;font-style:italic;">6</span>
<span style="left:48.18px;top:629px;font-size:14.2px;line-height:17px;letter-spacing:0.036px;color:#000;font-style:italic;">8100149736</span>
<span style="left:222.05px;top:629px;font-size:14.2px;line-height:17px;transform:scaleX(0.9700);transform-origin:0 0;color:#000;font-style:italic;">VIVO Y100 8/128GB Hijau</span>
<span style="left:386.40px;top:629px;font-size:14.2px;line-height:17px;color:#000;font-style:italic;">Ombak</span>
<span style="left:545.12px;top:629px;font-size:14.2px;line-height:17px;color:#000;font-style:italic;">3</span>
<span style="left:48.18px;top:649px;font-size:14.2px;line-height:17px;letter-spacing:0.013px;color:#000;font-style:italic;">8100149737</span>
<span style="left:215.35px;top:649px;font-size:14.2px;line-height:17px;transform:scaleX(0.9700);transform-origin:0 0;color:#000;font-style:italic;">VIVO Y100 8/256GB Kuning</span>
<span style="left:392.13px;top:649px;font-size:14.2px;line-height:17px;transform:scaleX(1.0149);transform-origin:0 0;color:#000;font-style:italic;">Lemon</span>
<span style="left:545.69px;top:649px;font-size:14.2px;line-height:17px;color:#000;font-style:italic;">1</span>
<span style="left:48.18px;top:669px;font-size:14.2px;line-height:17px;letter-spacing:0.142px;color:#000;font-style:italic;">8100115023</span>
<span style="left:271.46px;top:669px;font-size:14.2px;line-height:17px;transform:scaleX(0.9700);transform-origin:0 0;color:#000;font-style:italic;">VIVO Y36 8/128GB</span>
<span style="left:393.12px;top:669px;font-size:14.2px;line-height:17px;transform:scaleX(1.0210);transform-origin:0 0;color:#000;font-style:italic;">Blue</span>
<span style="left:545.69px;top:669px;font-size:14.2px;line-height:17px;color:#000;font-style:italic;">1</span>
<span style="left:48.18px;top:689px;font-size:14.2px;line-height:17px;letter-spacing:0.236px;color:#000;font-style:italic;">8100115024</span>
<span style="left:270.46px;top:689px;font-size:14.2px;line-height:17px;transform:scaleX(0.9700);transform-origin:0 0;color:#000;font-style:italic;">VIVO Y36 8/256GB</span>
<span style="left:391.43px;top:689px;font-size:14.2px;line-height:17px;transform:scaleX(0.9738);transform-origin:0 0;color:#000;font-style:italic;">Gray</span>
<span style="left:545.69px;top:689px;font-size:14.2px;line-height:17px;color:#000;font-style:italic;">1</span>
<span style="left:538.62px;top:807px;font-size:14.17px;line-height:17px;color:#000;">238</span>
<span style="left:283.28px;top:865px;font-size:14.17px;line-height:17px;color:#000;font-weight:700;font-style:italic;">Dengan ini dinyatakan bahwa ada / tidak ada selisih sbb</span>
<span style="left:415.52px;top:979px;font-size:14.17px;line-height:17px;color:#000;font-weight:700;font-style:italic;">Pangkalan Bun</span>
<span style="left:626.70px;top:979px;font-size:14.17px;line-height:17px;color:#000;font-weight:700;font-style:italic;">2024</span>
<span style="left:40.52px;top:1017px;font-size:14.17px;line-height:17px;color:#000;font-weight:700;font-style:italic;">PIC Opname</span>
<span style="left:307.94px;top:1017px;font-size:14.17px;line-height:17px;color:#000;font-weight:700;font-style:italic;">Kepala Gudang</span>
<span style="left:575.48px;top:1017px;font-size:14.17px;line-height:17px;color:#000;font-weight:700;font-style:italic;">SH</span>
<span style="left:724.80px;top:1017px;font-size:14.17px;line-height:17px;color:#000;font-weight:700;font-style:italic;">JSL/SL</span>
<div style="left:1897px;top:288px;width:22px;height:782px;background:#F6F6F6;border-radius:11px 0 0 11px"></div>
<div style="left:1902px;top:877px;width:11px;height:174px;background:#6E6E6E;border-radius:5.5px"></div>
<svg width="1919" height="1151" viewBox="0 0 1919 1151" style="left:0;top:0;"><path d="M1903.4 301.6L1907.5 295.6L1911.6 301.6Z" fill="#6E6E6E" stroke="#6E6E6E" stroke-width="2" stroke-linejoin="round"/><path d="M1903.4 1058.6L1907.5 1064.6L1911.6 1058.6Z" fill="#6E6E6E" stroke="#6E6E6E" stroke-width="2" stroke-linejoin="round"/></svg>
<div style="left:0px;top:1070px;width:1919px;height:41px;background:#F0F0F0"></div>
<div style="left:1176px;top:1079px;width:720px;height:21px;background:#F6F6F6;border-radius:10.5px"></div>
<div style="left:1197px;top:1084px;width:648px;height:11px;background:#6F6F6F;border-radius:5.5px"></div>
<div style="left:0px;top:1110px;width:1919px;height:41px;background:#F4F4F4;border-top:1px solid #CFCDCB"></div>
<div style="left:0px;top:1150px;width:1919px;height:1px;background:#2A211E"></div>
<span style="left:20.20px;top:1123px;font-size:13.33px;line-height:16px;transform:scaleX(0.9719);transform-origin:0 0;color:#242424;will-change:transform;">Select destination and press ENTER or choose Paste</span>
<div style="left:1535px;top:1111px;width:52px;height:39px;background:#DEDEDE"></div>
<span style="left:1878.11px;top:1123px;font-size:13.33px;line-height:16px;transform:scaleX(0.9290);transform-origin:0 0;color:#242424;will-change:transform;">85%</span>
<svg width="1919" height="1151" viewBox="0 0 1919 1151" style="left:0;top:0;"><rect x="0" y="1070" width="1895" height="1" fill="#D6D6D6"/><path d="M39 1083.2L32.8 1089.2L39 1095.2" fill="none" stroke="#A0A0A0" stroke-width="1.3"/><path d="M73.6 1083.2L79.8 1089.2L73.6 1095.2" fill="none" stroke="#A0A0A0" stroke-width="1.3"/><rect x="1154.6" y="1084.6" width="2" height="2" fill="#3a3a3a"/><rect x="1154.6" y="1088.8" width="2" height="2" fill="#3a3a3a"/><rect x="1154.6" y="1093" width="2" height="2" fill="#3a3a3a"/><path d="M1191.4 1085.6V1093.8L1185.6 1089.7Z" fill="#6E6E6E" stroke="#6E6E6E" stroke-width="1.8" stroke-linejoin="round"/><path d="M1883.4 1085.6V1093.8L1889.2 1089.7Z" fill="#6E6E6E" stroke="#6E6E6E" stroke-width="1.8" stroke-linejoin="round"/><path d="M1553 1122.8H1568.4V1138.2H1553ZM1558.1 1122.8V1138.2M1563.3 1122.8V1138.2M1553 1127.9H1568.4M1553 1133.1H1568.4" fill="none" stroke="#444" stroke-width="1.3"/><rect x="1604.7" y="1123.2" width="16.6" height="14.6" rx="1" fill="none" stroke="#444" stroke-width="1.3"/><rect x="1608.4" y="1126" width="9.2" height="9" fill="none" stroke="#444" stroke-width="1.3"/><path d="M1610.6 1128.8H1615.4M1610.6 1130.6H1615.4M1610.6 1132.4H1615.4" fill="none" stroke="#444" stroke-width="0.9"/><rect x="1656.7" y="1123.2" width="16.6" height="14.6" rx="1" fill="none" stroke="#444" stroke-width="1.3"/><path d="M1659.8 1123.2V1130.6H1666.6V1123.2M1663.2 1123.2V1130.6" fill="none" stroke="#444" stroke-width="1.3"/><rect x="1698" y="1129.4" width="9.4" height="1.2" fill="#444"/><rect x="1714" y="1129.6" width="125" height="1" fill="#6a6a6a"/><rect x="1776" y="1127" width="1" height="7" fill="#6a6a6a"/><rect x="1763.8" y="1123.2" width="6.2" height="13.6" rx="0.6" fill="#5A5A5A"/><path d="M1845 1130H1854.4M1849.7 1125.2V1134.8" fill="none" stroke="#444" stroke-width="1.2"/></svg>
<div style="left:108px;top:300px;width:337px;height:68.2px;background:#fff;box-shadow:0 1px 4px rgba(0,0,0,.22),0 0 1px rgba(0,0,0,.25)"></div>
<div style="left:115px;top:304px;width:72px;height:30px;background:#fff;border:1px solid #8A8A8A;border-radius:5px;overflow:hidden"></div>
<div style="left:116px;top:305px;width:54.4px;height:28px;overflow:hidden">
<span style="left:1.53px;top:7px;font-size:13.33px;line-height:16px;transform:scaleX(0.9657);transform-origin:0 0;color:#242424;">Calibri Light</span>
</div>
<div style="left:189px;top:304px;width:52px;height:30px;background:#fff;border:1px solid #8A8A8A;border-radius:5px"></div>
<span style="left:192.15px;top:312px;font-size:13.33px;line-height:16px;transform:scaleX(0.9424);transform-origin:0 0;color:#242424;">11</span>
<span style="left:248.36px;top:305px;font-size:22px;line-height:26px;color:#3a3a3a;will-change:transform;">A</span>
<span style="left:279.97px;top:310px;font-size:17px;line-height:20px;color:#3a3a3a;will-change:transform;">A</span>
<span style="left:356.00px;top:304px;font-size:24.5px;line-height:29px;color:#3a3a3a;">%</span>
<span style="left:123.78px;top:338px;font-size:15.5px;line-height:19px;color:#3a3a3a;font-weight:700;">B</span>
<div style="left:145px;top:334.4px;width:28px;height:29.4px;background:#EBEBEB;border:1px solid #8F8F8F;border-radius:5px"></div>
<span style="left:154.38px;top:338px;font-size:17.5px;line-height:21px;color:#3a3a3a;font-style:italic;font-family:'Liberation Serif', serif;">I</span>
<div style="left:175px;top:334.4px;width:27.6px;height:29.4px;background:#EBEBEB;border:1px solid #8F8F8F;border-radius:5px"></div>
<span style="left:262.27px;top:338px;font-size:17px;line-height:20px;color:#3a3a3a;will-change:transform;">A</span>
<svg width="1919" height="1151" viewBox="0 0 1919 1151" style="left:0;top:0;"><path d="M176.3 318.0L179.3 321.2L182.3 318.0" fill="none" stroke="#2b2b2b" stroke-width="1.4"/><path d="M230.4 318.0L233.4 321.2L236.4 318.0" fill="none" stroke="#2b2b2b" stroke-width="1.4"/><path d="M260.9 313.8L263.9 310.7L266.9 313.8" fill="none" stroke="#1E8BCD" stroke-width="1.4"/><path d="M291 310.6L293.9 313.7L296.8 310.6" fill="none" stroke="#1E8BCD" stroke-width="1.4"/><g transform="translate(306.9 312.6)"><rect x="0.6" y="0.6" width="18.8" height="11.6" fill="#fff" stroke="#3A3A3A" stroke-width="1.3"/><path d="M5.6 3.6C3 3.8 3 9 5.6 9.2M10.2 3.6C7.6 3.8 7.6 9 10.2 9.2M14 3.4C15.6 3.6 16.2 5 16 6.2" fill="none" stroke="#555" stroke-width="1.2" /><path d="M10.8 8.2V14.4C10.8 16.6 19.4 16.6 19.4 14.4V8.2Z" fill="#fff" stroke="#E8710A" stroke-width="1.3"/><ellipse cx="15.1" cy="8.2" rx="4.3" ry="1.8" fill="#fff" stroke="#E8710A" stroke-width="1.3"/><path d="M10.8 11.4C10.8 13.6 19.4 13.6 19.4 11.4" fill="none" stroke="#E8710A" stroke-width="1.3"/></g><path d="M336.5 318.0L339.5 321.2L342.5 318.0" fill="none" stroke="#2b2b2b" stroke-width="1.4"/><g transform="translate(391.9 311.4)"><path d="M4.8 0C7.8 0 9.6 2.2 9.6 5.4C9.6 10.4 5.6 14.4 0.6 15.4L0.2 14.2C3.6 13 5.8 10.6 6 8.4C3.4 9.2 0.8 7.4 0.8 4.4C0.8 1.8 2.6 0 4.8 0Z" fill="#333"/></g><path d="M416.6 313.3V309.70000000000005H434.4V313.3M425.5 309.70000000000005V313.3M416.6 323.90000000000003V327.5H434.4V323.90000000000003M425.5 323.90000000000003V327.5" fill="none" stroke="#4a4a4a" stroke-width="1.3" /><rect x="416.7" y="313.5" width="17.6" height="10.2" fill="#fff" stroke="#1E7FD0" stroke-width="1.4"/><path d="M419.4 318.6H431.6M422 316.0L419.4 318.6L422 321.20000000000005M429 316.0L431.6 318.6L429 321.20000000000005" fill="none" stroke="#1E7FD0" stroke-width="1.3" /><path d="M180 341.1H197.8M182.7 345.9H195.1M180 350.8H197.8M182.7 355.7H195.1" fill="none" stroke="#4a4a4a" stroke-width="1.3"/><g transform="translate(212 339.3)"><path d="M0.6 8L7.6 1.2L12.6 8.4L5.4 13.4Z" fill="#fff" stroke="#3A3A3A" stroke-width="1.3" stroke-linejoin="round"/><path d="M7.4 1.4C7.2 -0.4 9.6 -0.6 9.8 1.2L10.2 4.6" fill="none" stroke="#3A3A3A" stroke-width="1.2" /><path d="M12 4.4C14 5.4 14.8 8 14.4 11.4C13.6 9.4 13.2 7.6 11.4 6.4Z" fill="#1E74C5" stroke="#1E74C5" stroke-width="0.8"/></g><rect x="208.9" y="354.1" width="20.1" height="4.9" fill="#FFFF00"/><path d="M238.3 348.0L241.3 351.2L244.3 348.0" fill="none" stroke="#2b2b2b" stroke-width="1.4"/><rect x="257.8" y="354.1" width="20.1" height="4.9" fill="#FF0000"/><path d="M287.3 348.0L290.3 351.2L293.3 348.0" fill="none" stroke="#2b2b2b" stroke-width="1.4"/><rect x="307.6" y="339.8" width="17.8" height="16.6" fill="#F7F7F7"/><path d="M307.6 339.8H325.4M307.6 348.2H325.4M307.6 339.8V356.2M316.5 339.8V356.2M325.4 339.8V356.2" fill="none" stroke="#4a4a4a" stroke-width="1.1" stroke-dasharray="1.2 1.2"/><rect x="307" y="356.09999999999997" width="19" height="1.9" fill="#4a4a4a"/><path d="M336.5 348.0L339.5 351.2L342.5 348.0" fill="none" stroke="#2b2b2b" stroke-width="1.4"/><text x="366.40000000000003" y="348.2" font-family="Liberation Sans, sans-serif" font-size="10.6" fill="#3a3a3a" textLength="8.6" lengthAdjust="spacingAndGlyphs">.0</text><text x="359.40000000000003" y="357.8" font-family="Liberation Sans, sans-serif" font-size="10.6" fill="#3a3a3a" textLength="15.6" lengthAdjust="spacingAndGlyphs">.00</text><path d="M367.8 344.59999999999997H356.6M360.40000000000003 340.8L356.6 344.59999999999997L360.40000000000003 348.4" fill="none" stroke="#1E8BCD" stroke-width="1.3" /><text x="389.40000000000003" y="348.2" font-family="Liberation Sans, sans-serif" font-size="10.6" fill="#3a3a3a" textLength="15.6" lengthAdjust="spacingAndGlyphs">.00</text><text x="396.40000000000003" y="357.8" font-family="Liberation Sans, sans-serif" font-size="10.6" fill="#3a3a3a" textLength="8.6" lengthAdjust="spacingAndGlyphs">.0</text><path d="M385.8 353.8H396.0M392.2 350.0L396.0 353.8L392.2 357.59999999999997" fill="none" stroke="#1E8BCD" stroke-width="1.3" /><g transform="translate(416.4 339.4) scale(1.0)"><path d="M0.8 8.6L8.8 4.6L14 12.2L9 17.6Z" fill="#FFFDF8" stroke="#E8820E" stroke-width="1.3" stroke-linejoin="round"/><path d="M3.6 11.4L12 13.6L9 17L4.2 12.2Z" fill="#FDD88A" stroke="none"/><path d="M3.2 10.8L12.4 13.6" fill="none" stroke="#E8820E" stroke-width="1.1"/><path d="M9 4.4L11.6 2L17.6 8.6L15 11Z" fill="#fff" stroke="#3A3A3A" stroke-width="1.25" stroke-linejoin="round"/><path d="M13.6 4.2L17.6 0.8L19.2 2.6L15.4 6.2Z" fill="#fff" stroke="#3A3A3A" stroke-width="1.25" stroke-linejoin="round"/></g></svg>
<div style="left:108px;top:388px;width:279px;height:758px;background:#fff;border:1px solid #6A6A6A;box-shadow:2px 2px 3px rgba(0,0,0,.12)"></div>
<div style="left:115px;top:395px;width:265px;height:30px;background:#fff;border:1px solid #8A8A8A"></div>
<span style="left:122.82px;top:400px;font-size:13.33px;line-height:16px;transform:scaleX(0.9554);transform-origin:0 0;color:#707070;">Search the menus</span>
<span style="left:155.05px;top:439px;font-size:15px;line-height:18px;transform:scaleX(0.9545);transform-origin:0 0;color:#1F1F1F;">Cu<u>t</u></span>
<span style="left:155.03px;top:475px;font-size:15px;line-height:18px;transform:scaleX(0.9711);transform-origin:0 0;color:#1F1F1F;"><u>C</u>opy</span>
<span style="left:154.95px;top:592px;font-size:15px;line-height:18px;transform:scaleX(0.9296);transform-origin:0 0;color:#1F1F1F;">Paste <u>S</u>pecial...</span>
<span style="left:154.90px;top:631px;font-size:15px;line-height:18px;transform:scaleX(0.9858);transform-origin:0 0;color:#1F1F1F;">Smart <u>L</u>ookup</span>
<span style="left:154.90px;top:670px;font-size:15px;line-height:18px;transform:scaleX(0.9146);transform-origin:0 0;color:#1F1F1F;"><u>I</u>nsert...</span>
<span style="left:154.91px;top:706px;font-size:15px;line-height:18px;transform:scaleX(0.9638);transform-origin:0 0;color:#1F1F1F;"><u>D</u>elete...</span>
<span style="left:155.04px;top:742px;font-size:15px;line-height:18px;transform:scaleX(0.9635);transform-origin:0 0;color:#1F1F1F;">Clear Co<u>n</u>tents</span>
<span style="left:155.03px;top:781px;font-size:15px;line-height:18px;transform:scaleX(0.9672);transform-origin:0 0;color:#B9BEC6;"><u>Q</u>uick Analysis</span>
<span style="left:154.87px;top:817px;font-size:15px;line-height:18px;letter-spacing:0.008px;color:#1F1F1F;">Filt<u>e</u>r</span>
<span style="left:154.89px;top:853px;font-size:15px;line-height:18px;transform:scaleX(0.9968);transform-origin:0 0;color:#1F1F1F;">S<u>o</u>rt</span>
<span style="left:155.01px;top:892px;font-size:15px;line-height:18px;transform:scaleX(0.9939);transform-origin:0 0;color:#1F1F1F;"><u>G</u>et Data from Table/Range...</span>
<span style="left:154.82px;top:931px;font-size:15px;line-height:18px;transform:scaleX(0.9827);transform-origin:0 0;color:#1F1F1F;">Insert Co<u>m</u>ment</span>
<span style="left:154.93px;top:970px;font-size:15px;line-height:18px;transform:scaleX(0.9465);transform-origin:0 0;color:#1F1F1F;"><u>F</u>ormat Cells...</span>
<span style="left:154.90px;top:1006px;font-size:15px;line-height:18px;transform:scaleX(0.9778);transform-origin:0 0;color:#1F1F1F;">Pic<u>k</u> From Drop-down List...</span>
<span style="left:154.89px;top:1042px;font-size:15px;line-height:18px;transform:scaleX(0.9842);transform-origin:0 0;color:#1F1F1F;">Define N<u>a</u>me...</span>
<span style="left:154.90px;top:1081px;font-size:15px;line-height:18px;transform:scaleX(0.9749);transform-origin:0 0;color:#1F1F1F;">L<u>i</u>nk</span>
<span style="left:155.00px;top:1117px;font-size:15px;line-height:18px;letter-spacing:0.025px;color:#B9BEC6;"><u>O</u>pen Hyperlink</span>
<span style="left:156.03px;top:514px;font-size:15px;line-height:18px;transform:scaleX(0.9689);transform-origin:0 0;color:#1a1a1a;font-weight:700;">Paste Options:</span>
<svg width="1919" height="1151" viewBox="0 0 1919 1151" style="left:0;top:0;"><rect x="150" y="620" width="235" height="1" fill="#C8C8C8"/><rect x="150" y="659" width="235" height="1" fill="#C8C8C8"/><rect x="150" y="770" width="235" height="1" fill="#C8C8C8"/><rect x="150" y="881" width="235" height="1" fill="#C8C8C8"/><rect x="150" y="920" width="235" height="1" fill="#C8C8C8"/><rect x="150" y="959" width="235" height="1" fill="#C8C8C8"/><rect x="150" y="1070" width="235" height="1" fill="#C8C8C8"/><rect x="356" y="593.4" width="1" height="15" fill="#C8C8C8"/><path d="M367.9 594.6L373.7 600.2L367.9 605.8000000000001" fill="none" stroke="#2b2b2b" stroke-width="1.3"/><path d="M367.9 818.6L373.7 824.2L367.9 829.8000000000001" fill="none" stroke="#2b2b2b" stroke-width="1.3"/><path d="M367.9 854.6L373.7 860.2L367.9 865.8000000000001" fill="none" stroke="#2b2b2b" stroke-width="1.3"/><g transform="translate(127.2 436.4) scale(1.0)"><path d="M2.6 0.2L10.2 15.4M10.4 0.2L2.8 15.4" fill="none" stroke="#3A3A3A" stroke-width="1.15" /><circle cx="2.9" cy="17.3" r="2.05" fill="none" stroke="#1E8BCD" stroke-width="1.2" /><circle cx="10.2" cy="17.3" r="2.05" fill="none" stroke="#1E8BCD" stroke-width="1.2" /></g><g transform="translate(124.2 472.2) scale(1.0)"><path d="M7.6 17H0.6V0.6H6.4L8.2 2.4" fill="none" stroke="#3A3A3A" stroke-width="1.25" /><path d="M8.6 4.6H15.2L19.2 8.6V19H8.6Z" fill="#FAFAFA" stroke="#3A3A3A" stroke-width="1.25"/><path d="M15 4.8V8.8H19" fill="none" stroke="#3A3A3A" stroke-width="1.1" /><path d="M11.4 12.4H16.4M11.4 15.2H16.4" fill="none" stroke="#6a6a6a" stroke-width="1.1" /></g><g transform="translate(126.4 507.2)"><path d="M4.6 3.7H0.7V20.6H9.2M13.6 3.7H17.4V8.4" fill="none" stroke="#E8820E" stroke-width="1.4"/><path d="M4.6 7.2V3.4H6.6A2.5 2.5 0 0 1 11.6 3.4H13.6V7.2Z" fill="#fff" stroke="#8A8A8A" stroke-width="1.2"/></g><rect x="136.6" y="516.6" width="7" height="10" fill="#F5F5F5" stroke="#5E5E5E" stroke-width="1.3"/><g transform="translate(159.2 549.1)"><path d="M4.6 3.7H0.7V20.6H9.2M13.6 3.7H17.4V8.4" fill="none" stroke="#E8820E" stroke-width="1.4"/><path d="M4.6 7.2V3.4H6.6A2.5 2.5 0 0 1 11.6 3.4H13.6V7.2Z" fill="#fff" stroke="#8A8A8A" stroke-width="1.2"/></g><rect x="170.0" y="558.7" width="9.6" height="12.6" fill="#F5F5F5" stroke="#5E5E5E" stroke-width="1.3"/><g transform="translate(197 549.1)"><path d="M4.6 3.7H0.7V20.6H5.2M13.6 3.7H17.4V12.4" fill="none" stroke="#E8820E" stroke-width="1.4"/><path d="M4.6 7.2V3.4H6.6A2.5 2.5 0 0 1 11.6 3.4H13.6V7.2Z" fill="#fff" stroke="#8A8A8A" stroke-width="1.2"/></g><text x="202.2" y="571.7" font-family="Liberation Sans, sans-serif" font-size="10.4" fill="#4a4a4a" textLength="16" lengthAdjust="spacingAndGlyphs">123</text><g transform="translate(235.2 549.1)"><path d="M4.6 3.7H0.7V20.6H5.2M13.6 3.7H17.4V7.6" fill="none" stroke="#E8820E" stroke-width="1.4"/><path d="M4.6 7.2V3.4H6.6A2.5 2.5 0 0 1 11.6 3.4H13.6V7.2Z" fill="#fff" stroke="#8A8A8A" stroke-width="1.2"/></g><text x="246.6" y="567.7" font-family="Liberation Serif, serif" font-style="italic" font-size="13.5" fill="#4a4a4a">fx</text><g transform="translate(273 549.1)"><path d="M4.6 3.7H0.7V20.6H5.2M13.6 3.7H17.4V12.4" fill="none" stroke="#E8820E" stroke-width="1.4"/><path d="M4.6 7.2V3.4H6.6A2.5 2.5 0 0 1 11.6 3.4H13.6V7.2Z" fill="#fff" stroke="#8A8A8A" stroke-width="1.2"/></g><path d="M282.6 571.1V565.7H292.6M289.6 562.3000000000001L293 565.7L289.6 569.1" fill="none" stroke="#1E7FD0" stroke-width="1.5"/><g transform="translate(311 549.1)"><path d="M4.6 3.7H0.7V20.6H5.2M13.6 3.7H17.4V12.4" fill="none" stroke="#E8820E" stroke-width="1.4"/><path d="M4.6 7.2V3.4H6.6A2.5 2.5 0 0 1 11.6 3.4H13.6V7.2Z" fill="#fff" stroke="#8A8A8A" stroke-width="1.2"/></g><text x="315" y="566.7" font-family="Liberation Sans, sans-serif" font-size="10" fill="#1E7FD0">%</text><path d="M321.6 566.1L330.4 557.5C331.6 556.5 332.6 557.7 331.8 558.9L324 568.5Z" fill="#fff" stroke="#4a4a4a" stroke-width="1.1"/><path d="M321.6 566.1C319 565.7 318.4 568.1 317.4 569.7C316.8 570.7 315.6 570.9 314.6 570.9C317.6 572.5 322 572.1 324 568.5Z" fill="#5EA7E6" stroke="#1E74C5" stroke-width="1"/><g transform="translate(349.1 549.1)"><path d="M4.6 3.7H0.7V20.6H5.2M13.6 3.7H17.4V12.4" fill="none" stroke="#E8820E" stroke-width="1.4"/><path d="M4.6 7.2V3.4H6.6A2.5 2.5 0 0 1 11.6 3.4H13.6V7.2Z" fill="#fff" stroke="#8A8A8A" stroke-width="1.2"/></g><rect x="356.5" y="564.5" width="8.6" height="5.8" rx="2.9" fill="none" stroke="#1E7FD0" stroke-width="1.4"/><rect x="362.5" y="564.5" width="8.6" height="5.8" rx="2.9" fill="none" stroke="#1E7FD0" stroke-width="1.4"/><circle cx="137" cy="635" r="6.2" fill="#FCFCFC" stroke="#1E88D0" stroke-width="1.5"/><path d="M132.5 639.5L125.3 646.9" fill="none" stroke="#1E88D0" stroke-width="1.6"/><rect x="136" y="634.2" width="2.1" height="3.8" fill="#4a4a4a"/><rect x="136" y="631.6" width="2.1" height="1.5" fill="#4a4a4a"/><rect x="134.2" y="779.6" width="9.2" height="2.8" fill="#D4D4D4"/><path d="M133.8 779.6H143.4V796H124.8V790M132.6 782.5H143.4" fill="none" stroke="#A0A0A0" stroke-width="1.3"/><path d="M127.7 778.2H132.6L129.6 783.2H131.6L125.8 789.2H124.2L126.8 784.4H124.6Z" fill="#A8A8A8"/><rect x="128.6" y="788.8" width="11" height="3.7" fill="#fff" stroke="#959595" stroke-width="1.2"/><path d="M134 788.6V785.4C134 784.6 133.4 784.3 132.8 784.8" fill="none" stroke="#959595" stroke-width="1.1"/><rect x="124.7" y="890" width="17.6" height="17.4" fill="#fff" stroke="#4a4a4a" stroke-width="1.3"/><path d="M124.7 894.4H142.3M124.7 898.8H142.3M124.7 903.2H142.3M133.5 894.4V907.4" fill="none" stroke="#6a6a6a" stroke-width="1.2"/><path d="M127.2 891.4H131.6L129.4 893.6ZM135.4 891.4H139.8L137.6 893.6Z" fill="#1E7FD0"/><path d="M131.2 929.8H142.2V941.6H132.6L127.4 945.4V941.6H125.4V934.6" fill="none" stroke="#4a4a4a" stroke-width="1.3"/><path d="M124 932H132.4M128.2 927.8V936.2" fill="none" stroke="#2E9E4C" stroke-width="1.4"/><rect x="127" y="968" width="14" height="18" fill="#fff" stroke="#4a4a4a" stroke-width="1.3"/><rect x="130.4" y="973" width="2.6" height="2.6" fill="none" stroke="#6a6a6a" stroke-width="1"/><rect x="130.4" y="978.6" width="2.6" height="2.6" fill="none" stroke="#6a6a6a" stroke-width="1"/><path d="M134.6 974.3H137.4M134.6 979.9H137.4" stroke="#6a6a6a" stroke-width="1.1"/><rect x="124.7" y="1082" width="12" height="8.2" rx="4.1" fill="none" stroke="#3a3a3a" stroke-width="1.4"/><rect x="131.4" y="1086.2" width="12" height="8.2" rx="4.1" fill="none" stroke="#3a3a3a" stroke-width="1.4"/><path d="M238 568.1L595.4 592.5" fill="none" stroke="#FF0000" stroke-width="4.3" stroke-linecap="round"/><path d="M219.9 566.6L239.7 562.1L238.8 573.9Z" fill="#FF0000" stroke="#FF0000" stroke-width="0.6" stroke-linejoin="round"/></svg>
</body></html>
